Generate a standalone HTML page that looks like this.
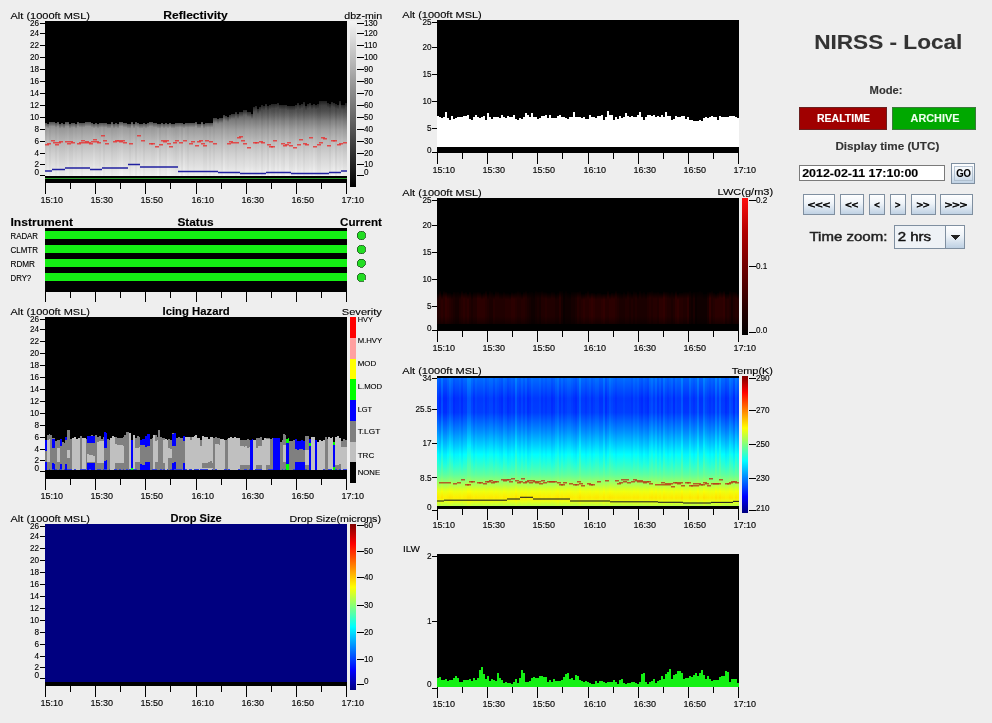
<!DOCTYPE html><html><head><meta charset="utf-8"><style>html,body{margin:0;padding:0;background:#eeeeee;overflow:hidden}svg{display:block;will-change:transform}text{font-family:"Liberation Sans",sans-serif}</style></head><body><svg width="992" height="723" viewBox="0 0 992 723" shape-rendering="crispEdges"><defs><linearGradient id="rg0" gradientUnits="userSpaceOnUse" x1="0" y1="100" x2="0" y2="176"><stop offset="0" stop-color="#444444"/><stop offset="0.05" stop-color="#4c4c4c"/><stop offset="0.16" stop-color="#606060"/><stop offset="0.28" stop-color="#7a7a7a"/><stop offset="0.39" stop-color="#999999"/><stop offset="0.53" stop-color="#b2b2b2"/><stop offset="0.72" stop-color="#cbcbcb"/><stop offset="0.86" stop-color="#dbdbdb"/><stop offset="0.95" stop-color="#e5e5e5"/><stop offset="1" stop-color="#eaeaea"/></linearGradient><linearGradient id="rg1" gradientUnits="userSpaceOnUse" x1="0" y1="100" x2="0" y2="176"><stop offset="0" stop-color="#474747"/><stop offset="0.05" stop-color="#4f4f4f"/><stop offset="0.16" stop-color="#636363"/><stop offset="0.28" stop-color="#7c7c7c"/><stop offset="0.39" stop-color="#9b9b9b"/><stop offset="0.53" stop-color="#b5b5b5"/><stop offset="0.72" stop-color="#cecece"/><stop offset="0.86" stop-color="#dddddd"/><stop offset="0.95" stop-color="#e8e8e8"/><stop offset="1" stop-color="#ededed"/></linearGradient><linearGradient id="rg2" gradientUnits="userSpaceOnUse" x1="0" y1="100" x2="0" y2="176"><stop offset="0" stop-color="#494949"/><stop offset="0.05" stop-color="#515151"/><stop offset="0.16" stop-color="#666666"/><stop offset="0.28" stop-color="#7f7f7f"/><stop offset="0.39" stop-color="#9e9e9e"/><stop offset="0.53" stop-color="#b7b7b7"/><stop offset="0.72" stop-color="#d1d1d1"/><stop offset="0.86" stop-color="#e0e0e0"/><stop offset="0.95" stop-color="#eaeaea"/><stop offset="1" stop-color="#efefef"/></linearGradient><linearGradient id="rg3" gradientUnits="userSpaceOnUse" x1="0" y1="100" x2="0" y2="176"><stop offset="0" stop-color="#4c4c4c"/><stop offset="0.05" stop-color="#545454"/><stop offset="0.16" stop-color="#686868"/><stop offset="0.28" stop-color="#828282"/><stop offset="0.39" stop-color="#a0a0a0"/><stop offset="0.53" stop-color="#bababa"/><stop offset="0.72" stop-color="#d3d3d3"/><stop offset="0.86" stop-color="#e2e2e2"/><stop offset="0.95" stop-color="#ededed"/><stop offset="1" stop-color="#f2f2f2"/></linearGradient><linearGradient id="rg4" gradientUnits="userSpaceOnUse" x1="0" y1="100" x2="0" y2="176"><stop offset="0" stop-color="#4f4f4f"/><stop offset="0.05" stop-color="#565656"/><stop offset="0.16" stop-color="#6b6b6b"/><stop offset="0.28" stop-color="#848484"/><stop offset="0.39" stop-color="#a3a3a3"/><stop offset="0.53" stop-color="#bcbcbc"/><stop offset="0.72" stop-color="#d6d6d6"/><stop offset="0.86" stop-color="#e5e5e5"/><stop offset="0.95" stop-color="#efefef"/><stop offset="1" stop-color="#f4f4f4"/></linearGradient><linearGradient id="edge" x1="0" y1="0" x2="0" y2="1"><stop offset="0" stop-color="#000" stop-opacity="0.45"/><stop offset="1" stop-color="#000" stop-opacity="0"/></linearGradient><linearGradient id="dk" gradientUnits="userSpaceOnUse" x1="0" y1="101" x2="0" y2="121"><stop offset="0" stop-color="#000" stop-opacity="0.3"/><stop offset="0.5" stop-color="#000" stop-opacity="0.2"/><stop offset="1" stop-color="#000" stop-opacity="0"/></linearGradient><linearGradient id="cbg" x1="0" y1="0" x2="0" y2="1"><stop offset="0" stop-color="#f4f4f4"/><stop offset="1" stop-color="#000"/></linearGradient><linearGradient id="cbj" x1="0" y1="0" x2="0" y2="1"><stop offset="0" stop-color="#7f0000"/><stop offset="0.12" stop-color="#ff0000"/><stop offset="0.25" stop-color="#ff7f00"/><stop offset="0.38" stop-color="#ffff00"/><stop offset="0.5" stop-color="#7fff7f"/><stop offset="0.62" stop-color="#00ffff"/><stop offset="0.75" stop-color="#007fff"/><stop offset="0.88" stop-color="#0000ff"/><stop offset="1" stop-color="#00007f"/></linearGradient><linearGradient id="lw0" x1="0" y1="0" x2="0" y2="1"><stop offset="0" stop-color="#030000"/><stop offset="0.2" stop-color="#0a0000"/><stop offset="0.75" stop-color="#0a0000"/><stop offset="1" stop-color="#060000"/></linearGradient><linearGradient id="lw1" x1="0" y1="0" x2="0" y2="1"><stop offset="0" stop-color="#030000"/><stop offset="0.2" stop-color="#0f0000"/><stop offset="0.75" stop-color="#0f0000"/><stop offset="1" stop-color="#090000"/></linearGradient><linearGradient id="lw2" x1="0" y1="0" x2="0" y2="1"><stop offset="0" stop-color="#030000"/><stop offset="0.2" stop-color="#150000"/><stop offset="0.75" stop-color="#150000"/><stop offset="1" stop-color="#0c0000"/></linearGradient><linearGradient id="lw3" x1="0" y1="0" x2="0" y2="1"><stop offset="0" stop-color="#030000"/><stop offset="0.2" stop-color="#1a0000"/><stop offset="0.75" stop-color="#1a0000"/><stop offset="1" stop-color="#0f0000"/></linearGradient><linearGradient id="lw4" x1="0" y1="0" x2="0" y2="1"><stop offset="0" stop-color="#030000"/><stop offset="0.2" stop-color="#200000"/><stop offset="0.75" stop-color="#200000"/><stop offset="1" stop-color="#120000"/></linearGradient><linearGradient id="lw5" x1="0" y1="0" x2="0" y2="1"><stop offset="0" stop-color="#030000"/><stop offset="0.2" stop-color="#250000"/><stop offset="0.75" stop-color="#250000"/><stop offset="1" stop-color="#150000"/></linearGradient><linearGradient id="lw6" x1="0" y1="0" x2="0" y2="1"><stop offset="0" stop-color="#030000"/><stop offset="0.2" stop-color="#2b0000"/><stop offset="0.75" stop-color="#2b0000"/><stop offset="1" stop-color="#180000"/></linearGradient><linearGradient id="lw7" x1="0" y1="0" x2="0" y2="1"><stop offset="0" stop-color="#030000"/><stop offset="0.2" stop-color="#300000"/><stop offset="0.75" stop-color="#300000"/><stop offset="1" stop-color="#1b0000"/></linearGradient><linearGradient id="cbr" x1="0" y1="0" x2="0" y2="1"><stop offset="0" stop-color="#ff1010"/><stop offset="0.25" stop-color="#b00000"/><stop offset="0.5" stop-color="#700000"/><stop offset="0.8" stop-color="#280000"/><stop offset="1" stop-color="#000"/></linearGradient><linearGradient id="tg0" gradientUnits="userSpaceOnUse" x1="0" y1="378" x2="0" y2="505.5"><stop offset="0" stop-color="#005bff"/><stop offset="0.05" stop-color="#004cff"/><stop offset="0.16" stop-color="#0028ff"/><stop offset="0.27" stop-color="#002dff"/><stop offset="0.42" stop-color="#007fff"/><stop offset="0.53" stop-color="#00c1ff"/><stop offset="0.6" stop-color="#00efff"/><stop offset="0.68" stop-color="#1effe0"/><stop offset="0.76" stop-color="#5cffa2"/><stop offset="0.84" stop-color="#adff51"/><stop offset="0.89" stop-color="#ebff13"/><stop offset="0.94" stop-color="#ffef00"/><stop offset="0.97" stop-color="#e0ff1e"/><stop offset="1" stop-color="#b8ff46"/></linearGradient><linearGradient id="tg1" gradientUnits="userSpaceOnUse" x1="0" y1="378" x2="0" y2="505.5"><stop offset="0" stop-color="#0062ff"/><stop offset="0.05" stop-color="#0053ff"/><stop offset="0.16" stop-color="#002fff"/><stop offset="0.27" stop-color="#0035ff"/><stop offset="0.42" stop-color="#0086ff"/><stop offset="0.53" stop-color="#00c8ff"/><stop offset="0.6" stop-color="#00f6ff"/><stop offset="0.68" stop-color="#25ffd9"/><stop offset="0.76" stop-color="#5effa0"/><stop offset="0.84" stop-color="#b0ff4e"/><stop offset="0.89" stop-color="#edff11"/><stop offset="0.94" stop-color="#ffed00"/><stop offset="0.97" stop-color="#e3ff1b"/><stop offset="1" stop-color="#baff44"/></linearGradient><linearGradient id="tg2" gradientUnits="userSpaceOnUse" x1="0" y1="378" x2="0" y2="505.5"><stop offset="0" stop-color="#006bff"/><stop offset="0.05" stop-color="#005bff"/><stop offset="0.16" stop-color="#0038ff"/><stop offset="0.27" stop-color="#003dff"/><stop offset="0.42" stop-color="#008eff"/><stop offset="0.53" stop-color="#00d1ff"/><stop offset="0.6" stop-color="#00ffff"/><stop offset="0.68" stop-color="#2dffd1"/><stop offset="0.76" stop-color="#60ff9e"/><stop offset="0.84" stop-color="#b2ff4c"/><stop offset="0.89" stop-color="#efff0f"/><stop offset="0.94" stop-color="#ffea00"/><stop offset="0.97" stop-color="#e5ff19"/><stop offset="1" stop-color="#bcff42"/></linearGradient><linearGradient id="tg3" gradientUnits="userSpaceOnUse" x1="0" y1="378" x2="0" y2="505.5"><stop offset="0" stop-color="#0073ff"/><stop offset="0.05" stop-color="#0063ff"/><stop offset="0.16" stop-color="#0040ff"/><stop offset="0.27" stop-color="#0045ff"/><stop offset="0.42" stop-color="#0096ff"/><stop offset="0.53" stop-color="#00d9ff"/><stop offset="0.6" stop-color="#08fff6"/><stop offset="0.68" stop-color="#36ffc8"/><stop offset="0.76" stop-color="#63ff9b"/><stop offset="0.84" stop-color="#b4ff4a"/><stop offset="0.89" stop-color="#f2ff0c"/><stop offset="0.94" stop-color="#ffe800"/><stop offset="0.97" stop-color="#e7ff17"/><stop offset="1" stop-color="#bfff3f"/></linearGradient><linearGradient id="tg4" gradientUnits="userSpaceOnUse" x1="0" y1="378" x2="0" y2="505.5"><stop offset="0" stop-color="#007dff"/><stop offset="0.05" stop-color="#006eff"/><stop offset="0.16" stop-color="#004aff"/><stop offset="0.27" stop-color="#004fff"/><stop offset="0.42" stop-color="#00a1ff"/><stop offset="0.53" stop-color="#00e3ff"/><stop offset="0.6" stop-color="#12ffec"/><stop offset="0.68" stop-color="#40ffbe"/><stop offset="0.76" stop-color="#66ff98"/><stop offset="0.84" stop-color="#b8ff46"/><stop offset="0.89" stop-color="#f5ff09"/><stop offset="0.94" stop-color="#ffe500"/><stop offset="0.97" stop-color="#ebff13"/><stop offset="1" stop-color="#c2ff3c"/></linearGradient><linearGradient id="tg5" gradientUnits="userSpaceOnUse" x1="0" y1="378" x2="0" y2="505.5"><stop offset="0" stop-color="#0089ff"/><stop offset="0.05" stop-color="#007aff"/><stop offset="0.16" stop-color="#0056ff"/><stop offset="0.27" stop-color="#005bff"/><stop offset="0.42" stop-color="#00adff"/><stop offset="0.53" stop-color="#00efff"/><stop offset="0.6" stop-color="#1effe0"/><stop offset="0.68" stop-color="#4cffb2"/><stop offset="0.76" stop-color="#6aff94"/><stop offset="0.84" stop-color="#bbff43"/><stop offset="0.89" stop-color="#f8ff06"/><stop offset="0.94" stop-color="#ffe100"/><stop offset="0.97" stop-color="#eeff10"/><stop offset="1" stop-color="#c5ff39"/></linearGradient><linearGradient id="btn" x1="0" y1="0" x2="0" y2="1"><stop offset="0" stop-color="#ffffff"/><stop offset="0.45" stop-color="#eef3f8"/><stop offset="1" stop-color="#bccfe2"/></linearGradient></defs><rect x="0" y="0" width="992" height="723" fill="#eeeeee"/>
<text x="10.5" y="18.6" font-size="9.8" textLength="79.5" lengthAdjust="spacingAndGlyphs" fill="#000" stroke="#000" stroke-width="0.12" font-family="Liberation Sans">Alt (1000ft MSL)</text>
<text x="163.3" y="18.6" font-size="10.6" font-weight="bold" textLength="64.5" lengthAdjust="spacingAndGlyphs" fill="#000" stroke="#000" stroke-width="0.12" font-family="Liberation Sans">Reflectivity</text>
<text x="344.3" y="18.6" font-size="9.8" textLength="37.8" lengthAdjust="spacingAndGlyphs" fill="#000" stroke="#000" stroke-width="0.12" font-family="Liberation Sans">dbz-min</text>
<rect x="45" y="21" width="302" height="155" fill="#000"/>
<rect x="45" y="122.5" width="2" height="53.5" fill="url(#rg1)"/>
<rect x="45" y="122.5" width="2" height="5" fill="url(#edge)"/>
<rect x="47" y="123.5" width="2" height="52.5" fill="url(#rg3)"/>
<rect x="47" y="123.5" width="2" height="5" fill="url(#edge)"/>
<rect x="49" y="121.5" width="2" height="54.5" fill="url(#rg0)"/>
<rect x="49" y="121.5" width="2" height="5" fill="url(#edge)"/>
<rect x="51" y="121.5" width="2" height="54.5" fill="url(#rg2)"/>
<rect x="51" y="121.5" width="2" height="5" fill="url(#edge)"/>
<rect x="53" y="121.5" width="2" height="54.5" fill="url(#rg2)"/>
<rect x="53" y="121.5" width="2" height="5" fill="url(#edge)"/>
<rect x="55" y="122.5" width="2" height="53.5" fill="url(#rg0)"/>
<rect x="55" y="122.5" width="2" height="5" fill="url(#edge)"/>
<rect x="57" y="121.5" width="2" height="54.5" fill="url(#rg2)"/>
<rect x="57" y="121.5" width="2" height="5" fill="url(#edge)"/>
<rect x="59" y="123.5" width="2" height="52.5" fill="url(#rg0)"/>
<rect x="59" y="123.5" width="2" height="5" fill="url(#edge)"/>
<rect x="61" y="122.5" width="2" height="53.5" fill="url(#rg0)"/>
<rect x="61" y="122.5" width="2" height="5" fill="url(#edge)"/>
<rect x="63" y="123.5" width="2" height="52.5" fill="url(#rg0)"/>
<rect x="63" y="123.5" width="2" height="5" fill="url(#edge)"/>
<rect x="65" y="121.5" width="2" height="54.5" fill="url(#rg1)"/>
<rect x="65" y="121.5" width="2" height="5" fill="url(#edge)"/>
<rect x="67" y="121.5" width="2" height="54.5" fill="url(#rg2)"/>
<rect x="67" y="121.5" width="2" height="5" fill="url(#edge)"/>
<rect x="69" y="123.5" width="2" height="52.5" fill="url(#rg0)"/>
<rect x="69" y="123.5" width="2" height="5" fill="url(#edge)"/>
<rect x="71" y="122.5" width="2" height="53.5" fill="url(#rg0)"/>
<rect x="71" y="122.5" width="2" height="5" fill="url(#edge)"/>
<rect x="73" y="122.5" width="2" height="53.5" fill="url(#rg2)"/>
<rect x="73" y="122.5" width="2" height="5" fill="url(#edge)"/>
<rect x="75" y="123.5" width="2" height="52.5" fill="url(#rg1)"/>
<rect x="75" y="123.5" width="2" height="5" fill="url(#edge)"/>
<rect x="77" y="121.5" width="2" height="54.5" fill="url(#rg2)"/>
<rect x="77" y="121.5" width="2" height="5" fill="url(#edge)"/>
<rect x="79" y="122.5" width="2" height="53.5" fill="url(#rg2)"/>
<rect x="79" y="122.5" width="2" height="5" fill="url(#edge)"/>
<rect x="81" y="122.5" width="2" height="53.5" fill="url(#rg0)"/>
<rect x="81" y="122.5" width="2" height="5" fill="url(#edge)"/>
<rect x="83" y="122.5" width="2" height="53.5" fill="url(#rg2)"/>
<rect x="83" y="122.5" width="2" height="5" fill="url(#edge)"/>
<rect x="85" y="121.5" width="2" height="54.5" fill="url(#rg2)"/>
<rect x="85" y="121.5" width="2" height="5" fill="url(#edge)"/>
<rect x="87" y="121.5" width="2" height="54.5" fill="url(#rg2)"/>
<rect x="87" y="121.5" width="2" height="5" fill="url(#edge)"/>
<rect x="89" y="121.5" width="2" height="54.5" fill="url(#rg2)"/>
<rect x="89" y="121.5" width="2" height="5" fill="url(#edge)"/>
<rect x="91" y="122.5" width="2" height="53.5" fill="url(#rg2)"/>
<rect x="91" y="122.5" width="2" height="5" fill="url(#edge)"/>
<rect x="93" y="123.5" width="2" height="52.5" fill="url(#rg4)"/>
<rect x="93" y="123.5" width="2" height="5" fill="url(#edge)"/>
<rect x="95" y="122.5" width="2" height="53.5" fill="url(#rg2)"/>
<rect x="95" y="122.5" width="2" height="5" fill="url(#edge)"/>
<rect x="97" y="123.5" width="2" height="52.5" fill="url(#rg2)"/>
<rect x="97" y="123.5" width="2" height="5" fill="url(#edge)"/>
<rect x="99" y="122.5" width="2" height="53.5" fill="url(#rg1)"/>
<rect x="99" y="122.5" width="2" height="5" fill="url(#edge)"/>
<rect x="101" y="122.5" width="2" height="53.5" fill="url(#rg3)"/>
<rect x="101" y="122.5" width="2" height="5" fill="url(#edge)"/>
<rect x="103" y="122.5" width="2" height="53.5" fill="url(#rg0)"/>
<rect x="103" y="122.5" width="2" height="5" fill="url(#edge)"/>
<rect x="105" y="122.5" width="2" height="53.5" fill="url(#rg2)"/>
<rect x="105" y="122.5" width="2" height="5" fill="url(#edge)"/>
<rect x="107" y="123.5" width="2" height="52.5" fill="url(#rg2)"/>
<rect x="107" y="123.5" width="2" height="5" fill="url(#edge)"/>
<rect x="109" y="123.5" width="2" height="52.5" fill="url(#rg2)"/>
<rect x="109" y="123.5" width="2" height="5" fill="url(#edge)"/>
<rect x="111" y="121.5" width="2" height="54.5" fill="url(#rg0)"/>
<rect x="111" y="121.5" width="2" height="5" fill="url(#edge)"/>
<rect x="113" y="123.5" width="2" height="52.5" fill="url(#rg1)"/>
<rect x="113" y="123.5" width="2" height="5" fill="url(#edge)"/>
<rect x="115" y="122.5" width="2" height="53.5" fill="url(#rg1)"/>
<rect x="115" y="122.5" width="2" height="5" fill="url(#edge)"/>
<rect x="117" y="123.5" width="2" height="52.5" fill="url(#rg2)"/>
<rect x="117" y="123.5" width="2" height="5" fill="url(#edge)"/>
<rect x="119" y="121.5" width="2" height="54.5" fill="url(#rg3)"/>
<rect x="119" y="121.5" width="2" height="5" fill="url(#edge)"/>
<rect x="121" y="121.5" width="2" height="54.5" fill="url(#rg4)"/>
<rect x="121" y="121.5" width="2" height="5" fill="url(#edge)"/>
<rect x="123" y="122.5" width="2" height="53.5" fill="url(#rg2)"/>
<rect x="123" y="122.5" width="2" height="5" fill="url(#edge)"/>
<rect x="125" y="122.5" width="2" height="53.5" fill="url(#rg2)"/>
<rect x="125" y="122.5" width="2" height="5" fill="url(#edge)"/>
<rect x="127" y="123.5" width="2" height="52.5" fill="url(#rg2)"/>
<rect x="127" y="123.5" width="2" height="5" fill="url(#edge)"/>
<rect x="129" y="123.5" width="2" height="52.5" fill="url(#rg0)"/>
<rect x="129" y="123.5" width="2" height="5" fill="url(#edge)"/>
<rect x="131" y="121.5" width="2" height="54.5" fill="url(#rg2)"/>
<rect x="131" y="121.5" width="2" height="5" fill="url(#edge)"/>
<rect x="133" y="123.5" width="2" height="52.5" fill="url(#rg3)"/>
<rect x="133" y="123.5" width="2" height="5" fill="url(#edge)"/>
<rect x="135" y="121.5" width="2" height="54.5" fill="url(#rg0)"/>
<rect x="135" y="121.5" width="2" height="5" fill="url(#edge)"/>
<rect x="137" y="122.5" width="2" height="53.5" fill="url(#rg3)"/>
<rect x="137" y="122.5" width="2" height="5" fill="url(#edge)"/>
<rect x="139" y="123.5" width="2" height="52.5" fill="url(#rg2)"/>
<rect x="139" y="123.5" width="2" height="5" fill="url(#edge)"/>
<rect x="141" y="123.5" width="2" height="52.5" fill="url(#rg3)"/>
<rect x="141" y="123.5" width="2" height="5" fill="url(#edge)"/>
<rect x="143" y="122.5" width="2" height="53.5" fill="url(#rg0)"/>
<rect x="143" y="122.5" width="2" height="5" fill="url(#edge)"/>
<rect x="145" y="123.5" width="2" height="52.5" fill="url(#rg2)"/>
<rect x="145" y="123.5" width="2" height="5" fill="url(#edge)"/>
<rect x="147" y="122.5" width="2" height="53.5" fill="url(#rg2)"/>
<rect x="147" y="122.5" width="2" height="5" fill="url(#edge)"/>
<rect x="149" y="121.5" width="2" height="54.5" fill="url(#rg2)"/>
<rect x="149" y="121.5" width="2" height="5" fill="url(#edge)"/>
<rect x="151" y="121.5" width="2" height="54.5" fill="url(#rg1)"/>
<rect x="151" y="121.5" width="2" height="5" fill="url(#edge)"/>
<rect x="153" y="122.5" width="2" height="53.5" fill="url(#rg1)"/>
<rect x="153" y="122.5" width="2" height="5" fill="url(#edge)"/>
<rect x="155" y="122.5" width="2" height="53.5" fill="url(#rg2)"/>
<rect x="155" y="122.5" width="2" height="5" fill="url(#edge)"/>
<rect x="157" y="123.5" width="2" height="52.5" fill="url(#rg4)"/>
<rect x="157" y="123.5" width="2" height="5" fill="url(#edge)"/>
<rect x="159" y="123.5" width="2" height="52.5" fill="url(#rg0)"/>
<rect x="159" y="123.5" width="2" height="5" fill="url(#edge)"/>
<rect x="161" y="122.5" width="2" height="53.5" fill="url(#rg2)"/>
<rect x="161" y="122.5" width="2" height="5" fill="url(#edge)"/>
<rect x="163" y="123.5" width="2" height="52.5" fill="url(#rg2)"/>
<rect x="163" y="123.5" width="2" height="5" fill="url(#edge)"/>
<rect x="165" y="122.5" width="2" height="53.5" fill="url(#rg1)"/>
<rect x="165" y="122.5" width="2" height="5" fill="url(#edge)"/>
<rect x="167" y="123.5" width="2" height="52.5" fill="url(#rg4)"/>
<rect x="167" y="123.5" width="2" height="5" fill="url(#edge)"/>
<rect x="169" y="122.5" width="2" height="53.5" fill="url(#rg3)"/>
<rect x="169" y="122.5" width="2" height="5" fill="url(#edge)"/>
<rect x="171" y="123.5" width="2" height="52.5" fill="url(#rg2)"/>
<rect x="171" y="123.5" width="2" height="5" fill="url(#edge)"/>
<rect x="173" y="123.5" width="2" height="52.5" fill="url(#rg1)"/>
<rect x="173" y="123.5" width="2" height="5" fill="url(#edge)"/>
<rect x="175" y="122.5" width="2" height="53.5" fill="url(#rg0)"/>
<rect x="175" y="122.5" width="2" height="5" fill="url(#edge)"/>
<rect x="177" y="122.5" width="2" height="53.5" fill="url(#rg1)"/>
<rect x="177" y="122.5" width="2" height="5" fill="url(#edge)"/>
<rect x="179" y="122.5" width="2" height="53.5" fill="url(#rg3)"/>
<rect x="179" y="122.5" width="2" height="5" fill="url(#edge)"/>
<rect x="181" y="122.5" width="2" height="53.5" fill="url(#rg0)"/>
<rect x="181" y="122.5" width="2" height="5" fill="url(#edge)"/>
<rect x="183" y="123.5" width="2" height="52.5" fill="url(#rg4)"/>
<rect x="183" y="123.5" width="2" height="5" fill="url(#edge)"/>
<rect x="185" y="122.5" width="2" height="53.5" fill="url(#rg2)"/>
<rect x="185" y="122.5" width="2" height="5" fill="url(#edge)"/>
<rect x="187" y="122.5" width="2" height="53.5" fill="url(#rg0)"/>
<rect x="187" y="122.5" width="2" height="5" fill="url(#edge)"/>
<rect x="189" y="122.5" width="2" height="53.5" fill="url(#rg2)"/>
<rect x="189" y="122.5" width="2" height="5" fill="url(#edge)"/>
<rect x="191" y="122.5" width="2" height="53.5" fill="url(#rg2)"/>
<rect x="191" y="122.5" width="2" height="5" fill="url(#edge)"/>
<rect x="193" y="122.5" width="2" height="53.5" fill="url(#rg1)"/>
<rect x="193" y="122.5" width="2" height="5" fill="url(#edge)"/>
<rect x="195" y="121.5" width="2" height="54.5" fill="url(#rg2)"/>
<rect x="195" y="121.5" width="2" height="5" fill="url(#edge)"/>
<rect x="197" y="123.5" width="2" height="52.5" fill="url(#rg2)"/>
<rect x="197" y="123.5" width="2" height="5" fill="url(#edge)"/>
<rect x="199" y="123.5" width="2" height="52.5" fill="url(#rg2)"/>
<rect x="199" y="123.5" width="2" height="5" fill="url(#edge)"/>
<rect x="201" y="121.5" width="2" height="54.5" fill="url(#rg2)"/>
<rect x="201" y="121.5" width="2" height="5" fill="url(#edge)"/>
<rect x="203" y="123.5" width="2" height="52.5" fill="url(#rg0)"/>
<rect x="203" y="123.5" width="2" height="5" fill="url(#edge)"/>
<rect x="205" y="122.5" width="2" height="53.5" fill="url(#rg0)"/>
<rect x="205" y="122.5" width="2" height="5" fill="url(#edge)"/>
<rect x="207" y="122.5" width="2" height="53.5" fill="url(#rg2)"/>
<rect x="207" y="122.5" width="2" height="5" fill="url(#edge)"/>
<rect x="209" y="122.5" width="2" height="53.5" fill="url(#rg0)"/>
<rect x="209" y="122.5" width="2" height="5" fill="url(#edge)"/>
<rect x="211" y="122.5" width="2" height="53.5" fill="url(#rg2)"/>
<rect x="211" y="122.5" width="2" height="5" fill="url(#edge)"/>
<rect x="213" y="118" width="2" height="58" fill="url(#rg0)"/>
<rect x="213" y="118" width="2" height="5" fill="url(#edge)"/>
<rect x="215" y="118" width="2" height="58" fill="url(#rg2)"/>
<rect x="215" y="118" width="2" height="5" fill="url(#edge)"/>
<rect x="217" y="119" width="2" height="57" fill="url(#rg2)"/>
<rect x="217" y="119" width="2" height="5" fill="url(#edge)"/>
<rect x="219" y="118" width="2" height="58" fill="url(#rg2)"/>
<rect x="219" y="118" width="2" height="5" fill="url(#edge)"/>
<rect x="221" y="118" width="2" height="58" fill="url(#rg0)"/>
<rect x="221" y="118" width="2" height="5" fill="url(#edge)"/>
<rect x="223" y="115" width="2" height="61" fill="url(#rg4)"/>
<rect x="223" y="115" width="2" height="5" fill="url(#edge)"/>
<rect x="225" y="116" width="2" height="60" fill="url(#rg2)"/>
<rect x="225" y="116" width="2" height="5" fill="url(#edge)"/>
<rect x="227" y="117" width="2" height="59" fill="url(#rg1)"/>
<rect x="227" y="117" width="2" height="5" fill="url(#edge)"/>
<rect x="229" y="115" width="2" height="61" fill="url(#rg2)"/>
<rect x="229" y="115" width="2" height="5" fill="url(#edge)"/>
<rect x="231" y="114" width="2" height="62" fill="url(#rg2)"/>
<rect x="231" y="114" width="2" height="5" fill="url(#edge)"/>
<rect x="233" y="114" width="2" height="62" fill="url(#rg2)"/>
<rect x="233" y="114" width="2" height="5" fill="url(#edge)"/>
<rect x="235" y="112" width="2" height="64" fill="url(#rg0)"/>
<rect x="235" y="112" width="2" height="5" fill="url(#edge)"/>
<rect x="237" y="114" width="2" height="62" fill="url(#rg2)"/>
<rect x="237" y="114" width="2" height="5" fill="url(#edge)"/>
<rect x="239" y="112" width="2" height="64" fill="url(#rg2)"/>
<rect x="239" y="112" width="2" height="5" fill="url(#edge)"/>
<rect x="241" y="112" width="2" height="64" fill="url(#rg2)"/>
<rect x="241" y="112" width="2" height="5" fill="url(#edge)"/>
<rect x="243" y="110" width="2" height="66" fill="url(#rg1)"/>
<rect x="243" y="110" width="2" height="5" fill="url(#edge)"/>
<rect x="245" y="110" width="2" height="66" fill="url(#rg3)"/>
<rect x="245" y="110" width="2" height="5" fill="url(#edge)"/>
<rect x="247" y="112" width="2" height="64" fill="url(#rg3)"/>
<rect x="247" y="112" width="2" height="5" fill="url(#edge)"/>
<rect x="249" y="112" width="2" height="64" fill="url(#rg2)"/>
<rect x="249" y="112" width="2" height="5" fill="url(#edge)"/>
<rect x="251" y="114" width="2" height="62" fill="url(#rg3)"/>
<rect x="251" y="114" width="2" height="5" fill="url(#edge)"/>
<rect x="253" y="107" width="2" height="69" fill="url(#rg2)"/>
<rect x="253" y="107" width="2" height="5" fill="url(#edge)"/>
<rect x="255" y="106" width="2" height="70" fill="url(#rg1)"/>
<rect x="255" y="106" width="2" height="5" fill="url(#edge)"/>
<rect x="257" y="109" width="2" height="67" fill="url(#rg2)"/>
<rect x="257" y="109" width="2" height="5" fill="url(#edge)"/>
<rect x="259" y="107" width="2" height="69" fill="url(#rg3)"/>
<rect x="259" y="107" width="2" height="5" fill="url(#edge)"/>
<rect x="261" y="104.5" width="2" height="71.5" fill="url(#rg0)"/>
<rect x="261" y="104.5" width="2" height="5" fill="url(#edge)"/>
<rect x="263" y="105.5" width="2" height="70.5" fill="url(#rg2)"/>
<rect x="263" y="105.5" width="2" height="5" fill="url(#edge)"/>
<rect x="265" y="103.5" width="2" height="72.5" fill="url(#rg3)"/>
<rect x="265" y="103.5" width="2" height="5" fill="url(#edge)"/>
<rect x="267" y="105.5" width="2" height="70.5" fill="url(#rg0)"/>
<rect x="267" y="105.5" width="2" height="5" fill="url(#edge)"/>
<rect x="269" y="104.5" width="2" height="71.5" fill="url(#rg4)"/>
<rect x="269" y="104.5" width="2" height="5" fill="url(#edge)"/>
<rect x="271" y="103.5" width="2" height="72.5" fill="url(#rg2)"/>
<rect x="271" y="103.5" width="2" height="5" fill="url(#edge)"/>
<rect x="273" y="103.5" width="2" height="72.5" fill="url(#rg1)"/>
<rect x="273" y="103.5" width="2" height="5" fill="url(#edge)"/>
<rect x="275" y="103.5" width="2" height="72.5" fill="url(#rg4)"/>
<rect x="275" y="103.5" width="2" height="5" fill="url(#edge)"/>
<rect x="277" y="102.5" width="2" height="73.5" fill="url(#rg2)"/>
<rect x="277" y="102.5" width="2" height="5" fill="url(#edge)"/>
<rect x="279" y="104.5" width="2" height="71.5" fill="url(#rg4)"/>
<rect x="279" y="104.5" width="2" height="5" fill="url(#edge)"/>
<rect x="281" y="104.5" width="2" height="71.5" fill="url(#rg2)"/>
<rect x="281" y="104.5" width="2" height="5" fill="url(#edge)"/>
<rect x="283" y="104.5" width="2" height="71.5" fill="url(#rg1)"/>
<rect x="283" y="104.5" width="2" height="5" fill="url(#edge)"/>
<rect x="285" y="104.5" width="2" height="71.5" fill="url(#rg4)"/>
<rect x="285" y="104.5" width="2" height="5" fill="url(#edge)"/>
<rect x="287" y="105.5" width="2" height="70.5" fill="url(#rg4)"/>
<rect x="287" y="105.5" width="2" height="5" fill="url(#edge)"/>
<rect x="289" y="105.5" width="2" height="70.5" fill="url(#rg1)"/>
<rect x="289" y="105.5" width="2" height="5" fill="url(#edge)"/>
<rect x="291" y="105.5" width="2" height="70.5" fill="url(#rg1)"/>
<rect x="291" y="105.5" width="2" height="5" fill="url(#edge)"/>
<rect x="293" y="105.5" width="2" height="70.5" fill="url(#rg2)"/>
<rect x="293" y="105.5" width="2" height="5" fill="url(#edge)"/>
<rect x="295" y="104.5" width="2" height="71.5" fill="url(#rg4)"/>
<rect x="295" y="104.5" width="2" height="5" fill="url(#edge)"/>
<rect x="297" y="102.5" width="2" height="73.5" fill="url(#rg1)"/>
<rect x="297" y="102.5" width="2" height="5" fill="url(#edge)"/>
<rect x="299" y="104.5" width="2" height="71.5" fill="url(#rg2)"/>
<rect x="299" y="104.5" width="2" height="5" fill="url(#edge)"/>
<rect x="301" y="103.5" width="2" height="72.5" fill="url(#rg3)"/>
<rect x="301" y="103.5" width="2" height="5" fill="url(#edge)"/>
<rect x="303" y="101.5" width="2" height="74.5" fill="url(#rg0)"/>
<rect x="303" y="101.5" width="2" height="5" fill="url(#edge)"/>
<rect x="305" y="105.5" width="2" height="70.5" fill="url(#rg2)"/>
<rect x="305" y="105.5" width="2" height="5" fill="url(#edge)"/>
<rect x="307" y="103.5" width="2" height="72.5" fill="url(#rg2)"/>
<rect x="307" y="103.5" width="2" height="5" fill="url(#edge)"/>
<rect x="309" y="102.5" width="2" height="73.5" fill="url(#rg3)"/>
<rect x="309" y="102.5" width="2" height="5" fill="url(#edge)"/>
<rect x="311" y="104.5" width="2" height="71.5" fill="url(#rg2)"/>
<rect x="311" y="104.5" width="2" height="5" fill="url(#edge)"/>
<rect x="313" y="103.5" width="2" height="72.5" fill="url(#rg4)"/>
<rect x="313" y="103.5" width="2" height="5" fill="url(#edge)"/>
<rect x="315" y="104.5" width="2" height="71.5" fill="url(#rg2)"/>
<rect x="315" y="104.5" width="2" height="5" fill="url(#edge)"/>
<rect x="317" y="103.5" width="2" height="72.5" fill="url(#rg0)"/>
<rect x="317" y="103.5" width="2" height="5" fill="url(#edge)"/>
<rect x="319" y="100.5" width="2" height="75.5" fill="url(#rg0)"/>
<rect x="319" y="100.5" width="2" height="5" fill="url(#edge)"/>
<rect x="321" y="100.5" width="2" height="75.5" fill="url(#rg2)"/>
<rect x="321" y="100.5" width="2" height="5" fill="url(#edge)"/>
<rect x="323" y="100.5" width="2" height="75.5" fill="url(#rg2)"/>
<rect x="323" y="100.5" width="2" height="5" fill="url(#edge)"/>
<rect x="325" y="100.5" width="2" height="75.5" fill="url(#rg2)"/>
<rect x="325" y="100.5" width="2" height="5" fill="url(#edge)"/>
<rect x="327" y="102.5" width="2" height="73.5" fill="url(#rg2)"/>
<rect x="327" y="102.5" width="2" height="5" fill="url(#edge)"/>
<rect x="329" y="103.5" width="2" height="72.5" fill="url(#rg0)"/>
<rect x="329" y="103.5" width="2" height="5" fill="url(#edge)"/>
<rect x="331" y="101.5" width="2" height="74.5" fill="url(#rg3)"/>
<rect x="331" y="101.5" width="2" height="5" fill="url(#edge)"/>
<rect x="333" y="102.5" width="2" height="73.5" fill="url(#rg4)"/>
<rect x="333" y="102.5" width="2" height="5" fill="url(#edge)"/>
<rect x="335" y="103.5" width="2" height="72.5" fill="url(#rg0)"/>
<rect x="335" y="103.5" width="2" height="5" fill="url(#edge)"/>
<rect x="337" y="104.5" width="2" height="71.5" fill="url(#rg3)"/>
<rect x="337" y="104.5" width="2" height="5" fill="url(#edge)"/>
<rect x="339" y="100.5" width="2" height="75.5" fill="url(#rg2)"/>
<rect x="339" y="100.5" width="2" height="5" fill="url(#edge)"/>
<rect x="341" y="104.5" width="2" height="71.5" fill="url(#rg3)"/>
<rect x="341" y="104.5" width="2" height="5" fill="url(#edge)"/>
<rect x="343" y="104.5" width="2" height="71.5" fill="url(#rg1)"/>
<rect x="343" y="104.5" width="2" height="5" fill="url(#edge)"/>
<rect x="345" y="102.5" width="2" height="73.5" fill="url(#rg1)"/>
<rect x="345" y="102.5" width="2" height="5" fill="url(#edge)"/>
<rect x="215" y="100" width="132" height="21" fill="url(#dk)"/>
<rect x="45" y="144.2" width="4" height="1.2" fill="#e83030" shape-rendering="geometricPrecision"/>
<rect x="47" y="143.2" width="4" height="1.2" fill="#e83030" shape-rendering="geometricPrecision"/>
<rect x="51" y="140.2" width="4" height="1.2" fill="#e83030" shape-rendering="geometricPrecision"/>
<rect x="53" y="142.2" width="4" height="1.2" fill="#e83030" shape-rendering="geometricPrecision"/>
<rect x="55" y="144.2" width="4" height="1.2" fill="#e83030" shape-rendering="geometricPrecision"/>
<rect x="57" y="142.2" width="4" height="1.2" fill="#e83030" shape-rendering="geometricPrecision"/>
<rect x="59" y="141.2" width="4" height="1.2" fill="#e83030" shape-rendering="geometricPrecision"/>
<rect x="65" y="141.2" width="4" height="1.2" fill="#e83030" shape-rendering="geometricPrecision"/>
<rect x="67" y="143.2" width="4" height="1.2" fill="#e83030" shape-rendering="geometricPrecision"/>
<rect x="69" y="141.2" width="4" height="1.2" fill="#e83030" shape-rendering="geometricPrecision"/>
<rect x="71" y="142.2" width="4" height="1.2" fill="#e83030" shape-rendering="geometricPrecision"/>
<rect x="77" y="143.2" width="4" height="1.2" fill="#e83030" shape-rendering="geometricPrecision"/>
<rect x="79" y="142.2" width="4" height="1.2" fill="#e83030" shape-rendering="geometricPrecision"/>
<rect x="81" y="140.2" width="4" height="1.2" fill="#e83030" shape-rendering="geometricPrecision"/>
<rect x="83" y="142.2" width="4" height="1.2" fill="#e83030" shape-rendering="geometricPrecision"/>
<rect x="85" y="141.2" width="4" height="1.2" fill="#e83030" shape-rendering="geometricPrecision"/>
<rect x="87" y="142.2" width="4" height="1.2" fill="#e83030" shape-rendering="geometricPrecision"/>
<rect x="89" y="143.2" width="4" height="1.2" fill="#e83030" shape-rendering="geometricPrecision"/>
<rect x="91" y="141.2" width="4" height="1.2" fill="#e83030" shape-rendering="geometricPrecision"/>
<rect x="93" y="139.2" width="4" height="1.2" fill="#e83030" shape-rendering="geometricPrecision"/>
<rect x="95" y="141.2" width="4" height="1.2" fill="#e83030" shape-rendering="geometricPrecision"/>
<rect x="97" y="142.2" width="4" height="1.2" fill="#e83030" shape-rendering="geometricPrecision"/>
<rect x="101" y="135.2" width="4" height="1.2" fill="#e83030" shape-rendering="geometricPrecision"/>
<rect x="103" y="140.2" width="4" height="1.2" fill="#e83030" shape-rendering="geometricPrecision"/>
<rect x="105" y="143.2" width="4" height="1.2" fill="#e83030" shape-rendering="geometricPrecision"/>
<rect x="113" y="141.2" width="4" height="1.2" fill="#e83030" shape-rendering="geometricPrecision"/>
<rect x="115" y="140.2" width="4" height="1.2" fill="#e83030" shape-rendering="geometricPrecision"/>
<rect x="117" y="140.2" width="4" height="1.2" fill="#e83030" shape-rendering="geometricPrecision"/>
<rect x="119" y="141.2" width="4" height="1.2" fill="#e83030" shape-rendering="geometricPrecision"/>
<rect x="121" y="140.2" width="4" height="1.2" fill="#e83030" shape-rendering="geometricPrecision"/>
<rect x="123" y="142.2" width="4" height="1.2" fill="#e83030" shape-rendering="geometricPrecision"/>
<rect x="129" y="143.2" width="4" height="1.2" fill="#e83030" shape-rendering="geometricPrecision"/>
<rect x="137" y="135.2" width="4" height="1.2" fill="#e83030" shape-rendering="geometricPrecision"/>
<rect x="141" y="140.2" width="4" height="1.2" fill="#e83030" shape-rendering="geometricPrecision"/>
<rect x="149" y="143.2" width="4" height="1.2" fill="#e83030" shape-rendering="geometricPrecision"/>
<rect x="151" y="143.2" width="4" height="1.2" fill="#e83030" shape-rendering="geometricPrecision"/>
<rect x="155" y="146.2" width="4" height="1.2" fill="#e83030" shape-rendering="geometricPrecision"/>
<rect x="159" y="144.2" width="4" height="1.2" fill="#e83030" shape-rendering="geometricPrecision"/>
<rect x="161" y="140.2" width="4" height="1.2" fill="#e83030" shape-rendering="geometricPrecision"/>
<rect x="163" y="141.2" width="4" height="1.2" fill="#e83030" shape-rendering="geometricPrecision"/>
<rect x="165" y="140.2" width="4" height="1.2" fill="#e83030" shape-rendering="geometricPrecision"/>
<rect x="167" y="143.2" width="4" height="1.2" fill="#e83030" shape-rendering="geometricPrecision"/>
<rect x="169" y="146.2" width="4" height="1.2" fill="#e83030" shape-rendering="geometricPrecision"/>
<rect x="173" y="142.2" width="4" height="1.2" fill="#e83030" shape-rendering="geometricPrecision"/>
<rect x="175" y="140.2" width="4" height="1.2" fill="#e83030" shape-rendering="geometricPrecision"/>
<rect x="179" y="142.2" width="4" height="1.2" fill="#e83030" shape-rendering="geometricPrecision"/>
<rect x="183" y="140.2" width="4" height="1.2" fill="#e83030" shape-rendering="geometricPrecision"/>
<rect x="189" y="143.2" width="4" height="1.2" fill="#e83030" shape-rendering="geometricPrecision"/>
<rect x="191" y="141.2" width="4" height="1.2" fill="#e83030" shape-rendering="geometricPrecision"/>
<rect x="195" y="145.2" width="4" height="1.2" fill="#e83030" shape-rendering="geometricPrecision"/>
<rect x="197" y="141.2" width="4" height="1.2" fill="#e83030" shape-rendering="geometricPrecision"/>
<rect x="199" y="140.2" width="4" height="1.2" fill="#e83030" shape-rendering="geometricPrecision"/>
<rect x="201" y="143.2" width="4" height="1.2" fill="#e83030" shape-rendering="geometricPrecision"/>
<rect x="203" y="145.2" width="4" height="1.2" fill="#e83030" shape-rendering="geometricPrecision"/>
<rect x="205" y="140.2" width="4" height="1.2" fill="#e83030" shape-rendering="geometricPrecision"/>
<rect x="209" y="141.2" width="4" height="1.2" fill="#e83030" shape-rendering="geometricPrecision"/>
<rect x="213" y="143.2" width="4" height="1.2" fill="#e83030" shape-rendering="geometricPrecision"/>
<rect x="227" y="143.2" width="4" height="1.2" fill="#e83030" shape-rendering="geometricPrecision"/>
<rect x="229" y="141.2" width="4" height="1.2" fill="#e83030" shape-rendering="geometricPrecision"/>
<rect x="231" y="142.2" width="4" height="1.2" fill="#e83030" shape-rendering="geometricPrecision"/>
<rect x="235" y="142.2" width="4" height="1.2" fill="#e83030" shape-rendering="geometricPrecision"/>
<rect x="237" y="137.2" width="4" height="1.2" fill="#e83030" shape-rendering="geometricPrecision"/>
<rect x="239" y="136.2" width="4" height="1.2" fill="#e83030" shape-rendering="geometricPrecision"/>
<rect x="241" y="140.2" width="4" height="1.2" fill="#e83030" shape-rendering="geometricPrecision"/>
<rect x="243" y="143.2" width="4" height="1.2" fill="#e83030" shape-rendering="geometricPrecision"/>
<rect x="247" y="147.2" width="4" height="1.2" fill="#e83030" shape-rendering="geometricPrecision"/>
<rect x="253" y="142.2" width="4" height="1.2" fill="#e83030" shape-rendering="geometricPrecision"/>
<rect x="255" y="142.2" width="4" height="1.2" fill="#e83030" shape-rendering="geometricPrecision"/>
<rect x="259" y="141.2" width="4" height="1.2" fill="#e83030" shape-rendering="geometricPrecision"/>
<rect x="261" y="142.2" width="4" height="1.2" fill="#e83030" shape-rendering="geometricPrecision"/>
<rect x="267" y="144.2" width="4" height="1.2" fill="#e83030" shape-rendering="geometricPrecision"/>
<rect x="269" y="146.2" width="4" height="1.2" fill="#e83030" shape-rendering="geometricPrecision"/>
<rect x="271" y="146.2" width="4" height="1.2" fill="#e83030" shape-rendering="geometricPrecision"/>
<rect x="273" y="140.2" width="4" height="1.2" fill="#e83030" shape-rendering="geometricPrecision"/>
<rect x="281" y="143.2" width="4" height="1.2" fill="#e83030" shape-rendering="geometricPrecision"/>
<rect x="283" y="145.2" width="4" height="1.2" fill="#e83030" shape-rendering="geometricPrecision"/>
<rect x="285" y="144.2" width="4" height="1.2" fill="#e83030" shape-rendering="geometricPrecision"/>
<rect x="287" y="142.2" width="4" height="1.2" fill="#e83030" shape-rendering="geometricPrecision"/>
<rect x="289" y="145.2" width="4" height="1.2" fill="#e83030" shape-rendering="geometricPrecision"/>
<rect x="293" y="147.2" width="4" height="1.2" fill="#e83030" shape-rendering="geometricPrecision"/>
<rect x="297" y="144.2" width="4" height="1.2" fill="#e83030" shape-rendering="geometricPrecision"/>
<rect x="299" y="139.2" width="4" height="1.2" fill="#e83030" shape-rendering="geometricPrecision"/>
<rect x="303" y="143.2" width="4" height="1.2" fill="#e83030" shape-rendering="geometricPrecision"/>
<rect x="305" y="144.2" width="4" height="1.2" fill="#e83030" shape-rendering="geometricPrecision"/>
<rect x="309" y="137.2" width="4" height="1.2" fill="#e83030" shape-rendering="geometricPrecision"/>
<rect x="313" y="146.2" width="4" height="1.2" fill="#e83030" shape-rendering="geometricPrecision"/>
<rect x="317" y="144.2" width="4" height="1.2" fill="#e83030" shape-rendering="geometricPrecision"/>
<rect x="319" y="142.2" width="4" height="1.2" fill="#e83030" shape-rendering="geometricPrecision"/>
<rect x="321" y="137.2" width="4" height="1.2" fill="#e83030" shape-rendering="geometricPrecision"/>
<rect x="323" y="138.2" width="4" height="1.2" fill="#e83030" shape-rendering="geometricPrecision"/>
<rect x="327" y="145.2" width="4" height="1.2" fill="#e83030" shape-rendering="geometricPrecision"/>
<rect x="331" y="140.2" width="4" height="1.2" fill="#e83030" shape-rendering="geometricPrecision"/>
<rect x="333" y="140.2" width="4" height="1.2" fill="#e83030" shape-rendering="geometricPrecision"/>
<rect x="337" y="144.2" width="4" height="1.2" fill="#e83030" shape-rendering="geometricPrecision"/>
<rect x="339" y="143.2" width="4" height="1.2" fill="#e83030" shape-rendering="geometricPrecision"/>
<rect x="343" y="142.2" width="4" height="1.2" fill="#e83030" shape-rendering="geometricPrecision"/>
<rect x="45" y="170.25" width="7" height="1.5" fill="#2020a0" shape-rendering="geometricPrecision"/>
<rect x="52" y="168.75" width="13" height="1.5" fill="#2020a0" shape-rendering="geometricPrecision"/>
<rect x="65" y="167.25" width="25" height="1.5" fill="#2020a0" shape-rendering="geometricPrecision"/>
<rect x="90" y="168.75" width="12" height="1.5" fill="#2020a0" shape-rendering="geometricPrecision"/>
<rect x="102" y="167.25" width="26" height="1.5" fill="#2020a0" shape-rendering="geometricPrecision"/>
<rect x="128" y="163.75" width="12" height="1.5" fill="#2020a0" shape-rendering="geometricPrecision"/>
<rect x="140" y="166.25" width="38" height="1.5" fill="#2020a0" shape-rendering="geometricPrecision"/>
<rect x="178" y="170.75" width="40" height="1.5" fill="#2020a0" shape-rendering="geometricPrecision"/>
<rect x="218" y="171.75" width="22" height="1.5" fill="#2020a0" shape-rendering="geometricPrecision"/>
<rect x="240" y="172.75" width="26" height="1.5" fill="#2020a0" shape-rendering="geometricPrecision"/>
<rect x="266" y="171.75" width="25" height="1.5" fill="#2020a0" shape-rendering="geometricPrecision"/>
<rect x="291" y="172.75" width="38" height="1.5" fill="#2020a0" shape-rendering="geometricPrecision"/>
<rect x="329" y="171.75" width="12" height="1.5" fill="#2020a0" shape-rendering="geometricPrecision"/>
<rect x="341" y="170.25" width="6" height="1.5" fill="#2020a0" shape-rendering="geometricPrecision"/>
<rect x="45" y="176" width="302" height="7" fill="#000"/>
<rect x="45" y="177.6" width="302" height="1.6" fill="#30a030"/>
<rect x="45" y="183" width="1" height="11" fill="#000"/>
<text x="40.5" y="202.5" font-size="8.2" textLength="22.6" lengthAdjust="spacingAndGlyphs" fill="#000" stroke="#000" stroke-width="0.12" font-family="Liberation Sans">15:10</text>
<rect x="70" y="183" width="1" height="6" fill="#000"/>
<rect x="95" y="183" width="1" height="11" fill="#000"/>
<text x="90.5" y="202.5" font-size="8.2" textLength="22.6" lengthAdjust="spacingAndGlyphs" fill="#000" stroke="#000" stroke-width="0.12" font-family="Liberation Sans">15:30</text>
<rect x="120" y="183" width="1" height="6" fill="#000"/>
<rect x="145" y="183" width="1" height="11" fill="#000"/>
<text x="140.5" y="202.5" font-size="8.2" textLength="22.6" lengthAdjust="spacingAndGlyphs" fill="#000" stroke="#000" stroke-width="0.12" font-family="Liberation Sans">15:50</text>
<rect x="170" y="183" width="1" height="6" fill="#000"/>
<rect x="196" y="183" width="1" height="11" fill="#000"/>
<text x="191.5" y="202.5" font-size="8.2" textLength="22.6" lengthAdjust="spacingAndGlyphs" fill="#000" stroke="#000" stroke-width="0.12" font-family="Liberation Sans">16:10</text>
<rect x="221" y="183" width="1" height="6" fill="#000"/>
<rect x="246" y="183" width="1" height="11" fill="#000"/>
<text x="241.5" y="202.5" font-size="8.2" textLength="22.6" lengthAdjust="spacingAndGlyphs" fill="#000" stroke="#000" stroke-width="0.12" font-family="Liberation Sans">16:30</text>
<rect x="271" y="183" width="1" height="6" fill="#000"/>
<rect x="296" y="183" width="1" height="11" fill="#000"/>
<text x="291.5" y="202.5" font-size="8.2" textLength="22.6" lengthAdjust="spacingAndGlyphs" fill="#000" stroke="#000" stroke-width="0.12" font-family="Liberation Sans">16:50</text>
<rect x="321" y="183" width="1" height="6" fill="#000"/>
<rect x="346" y="183" width="1" height="11" fill="#000"/>
<text x="341.5" y="202.5" font-size="8.2" textLength="22.6" lengthAdjust="spacingAndGlyphs" fill="#000" stroke="#000" stroke-width="0.12" font-family="Liberation Sans">17:10</text>
<rect x="40" y="23" width="5" height="1" fill="#000"/>
<text x="39" y="26.1" font-size="8.2" text-anchor="end" fill="#000" stroke="#000" stroke-width="0.12" font-family="Liberation Sans">26</text>
<rect x="40" y="33" width="5" height="1" fill="#000"/>
<text x="39" y="35.9" font-size="8.2" text-anchor="end" fill="#000" stroke="#000" stroke-width="0.12" font-family="Liberation Sans">24</text>
<rect x="40" y="45" width="5" height="1" fill="#000"/>
<text x="39" y="47.8" font-size="8.2" text-anchor="end" fill="#000" stroke="#000" stroke-width="0.12" font-family="Liberation Sans">22</text>
<rect x="40" y="57" width="5" height="1" fill="#000"/>
<text x="39" y="59.7" font-size="8.2" text-anchor="end" fill="#000" stroke="#000" stroke-width="0.12" font-family="Liberation Sans">20</text>
<rect x="40" y="69" width="5" height="1" fill="#000"/>
<text x="39" y="71.6" font-size="8.2" text-anchor="end" fill="#000" stroke="#000" stroke-width="0.12" font-family="Liberation Sans">18</text>
<rect x="40" y="81" width="5" height="1" fill="#000"/>
<text x="39" y="83.6" font-size="8.2" text-anchor="end" fill="#000" stroke="#000" stroke-width="0.12" font-family="Liberation Sans">16</text>
<rect x="40" y="93" width="5" height="1" fill="#000"/>
<text x="39" y="95.6" font-size="8.2" text-anchor="end" fill="#000" stroke="#000" stroke-width="0.12" font-family="Liberation Sans">14</text>
<rect x="40" y="105" width="5" height="1" fill="#000"/>
<text x="39" y="107.6" font-size="8.2" text-anchor="end" fill="#000" stroke="#000" stroke-width="0.12" font-family="Liberation Sans">12</text>
<rect x="40" y="117" width="5" height="1" fill="#000"/>
<text x="39" y="119.6" font-size="8.2" text-anchor="end" fill="#000" stroke="#000" stroke-width="0.12" font-family="Liberation Sans">10</text>
<rect x="40" y="129" width="5" height="1" fill="#000"/>
<text x="39" y="131.6" font-size="8.2" text-anchor="end" fill="#000" stroke="#000" stroke-width="0.12" font-family="Liberation Sans">8</text>
<rect x="40" y="141" width="5" height="1" fill="#000"/>
<text x="39" y="143.6" font-size="8.2" text-anchor="end" fill="#000" stroke="#000" stroke-width="0.12" font-family="Liberation Sans">6</text>
<rect x="40" y="153" width="5" height="1" fill="#000"/>
<text x="39" y="155.8" font-size="8.2" text-anchor="end" fill="#000" stroke="#000" stroke-width="0.12" font-family="Liberation Sans">4</text>
<rect x="40" y="164" width="5" height="1" fill="#000"/>
<text x="39" y="167.1" font-size="8.2" text-anchor="end" fill="#000" stroke="#000" stroke-width="0.12" font-family="Liberation Sans">2</text>
<rect x="40" y="175" width="5" height="1" fill="#000"/>
<text x="39" y="175.2" font-size="8.2" text-anchor="end" fill="#000" stroke="#000" stroke-width="0.12" font-family="Liberation Sans">0</text>
<rect x="350" y="21" width="6" height="166" fill="url(#cbg)"/>
<rect x="357" y="23" width="7" height="1" fill="#000"/>
<text x="364" y="26.1" font-size="8.2" fill="#000" stroke="#000" stroke-width="0.12" font-family="Liberation Sans">130</text>
<rect x="357" y="33" width="7" height="1" fill="#000"/>
<text x="364" y="35.9" font-size="8.2" fill="#000" stroke="#000" stroke-width="0.12" font-family="Liberation Sans">120</text>
<rect x="357" y="45" width="7" height="1" fill="#000"/>
<text x="364" y="47.8" font-size="8.2" fill="#000" stroke="#000" stroke-width="0.12" font-family="Liberation Sans">110</text>
<rect x="357" y="57" width="7" height="1" fill="#000"/>
<text x="364" y="59.7" font-size="8.2" fill="#000" stroke="#000" stroke-width="0.12" font-family="Liberation Sans">100</text>
<rect x="357" y="69" width="7" height="1" fill="#000"/>
<text x="364" y="71.6" font-size="8.2" fill="#000" stroke="#000" stroke-width="0.12" font-family="Liberation Sans">90</text>
<rect x="357" y="81" width="7" height="1" fill="#000"/>
<text x="364" y="83.6" font-size="8.2" fill="#000" stroke="#000" stroke-width="0.12" font-family="Liberation Sans">80</text>
<rect x="357" y="93" width="7" height="1" fill="#000"/>
<text x="364" y="95.6" font-size="8.2" fill="#000" stroke="#000" stroke-width="0.12" font-family="Liberation Sans">70</text>
<rect x="357" y="105" width="7" height="1" fill="#000"/>
<text x="364" y="107.6" font-size="8.2" fill="#000" stroke="#000" stroke-width="0.12" font-family="Liberation Sans">60</text>
<rect x="357" y="117" width="7" height="1" fill="#000"/>
<text x="364" y="119.6" font-size="8.2" fill="#000" stroke="#000" stroke-width="0.12" font-family="Liberation Sans">50</text>
<rect x="357" y="129" width="7" height="1" fill="#000"/>
<text x="364" y="131.6" font-size="8.2" fill="#000" stroke="#000" stroke-width="0.12" font-family="Liberation Sans">40</text>
<rect x="357" y="141" width="7" height="1" fill="#000"/>
<text x="364" y="143.6" font-size="8.2" fill="#000" stroke="#000" stroke-width="0.12" font-family="Liberation Sans">30</text>
<rect x="357" y="153" width="7" height="1" fill="#000"/>
<text x="364" y="155.8" font-size="8.2" fill="#000" stroke="#000" stroke-width="0.12" font-family="Liberation Sans">20</text>
<rect x="357" y="164" width="7" height="1" fill="#000"/>
<text x="364" y="167.1" font-size="8.2" fill="#000" stroke="#000" stroke-width="0.12" font-family="Liberation Sans">10</text>
<rect x="357" y="175" width="7" height="1" fill="#000"/>
<text x="364" y="175.2" font-size="8.2" fill="#000" stroke="#000" stroke-width="0.12" font-family="Liberation Sans">0</text>
<text x="10.5" y="225.7" font-size="10.6" font-weight="bold" textLength="62.5" lengthAdjust="spacingAndGlyphs" fill="#000" stroke="#000" stroke-width="0.12" font-family="Liberation Sans">Instrument</text>
<text x="177.4" y="225.8" font-size="10.6" font-weight="bold" textLength="36.3" lengthAdjust="spacingAndGlyphs" fill="#000" stroke="#000" stroke-width="0.12" font-family="Liberation Sans">Status</text>
<text x="340" y="225.7" font-size="10.6" font-weight="bold" textLength="42" lengthAdjust="spacingAndGlyphs" fill="#000" stroke="#000" stroke-width="0.12" font-family="Liberation Sans">Current</text>
<rect x="45" y="228" width="302" height="64" fill="#000"/>
<rect x="45" y="231" width="302" height="8" fill="#14f014"/>
<rect x="45" y="245" width="302" height="8" fill="#14f014"/>
<rect x="45" y="259" width="302" height="8" fill="#14f014"/>
<rect x="45" y="273" width="302" height="8" fill="#14f014"/>
<text x="10.5" y="238.9" font-size="8.2" textLength="27.5" lengthAdjust="spacingAndGlyphs" fill="#000" stroke="#000" stroke-width="0.12" font-family="Liberation Sans">RADAR</text>
<text x="10.5" y="252.6" font-size="8.2" textLength="27.5" lengthAdjust="spacingAndGlyphs" fill="#000" stroke="#000" stroke-width="0.12" font-family="Liberation Sans">CLMTR</text>
<text x="10.5" y="266.6" font-size="8.2" textLength="24.5" lengthAdjust="spacingAndGlyphs" fill="#000" stroke="#000" stroke-width="0.12" font-family="Liberation Sans">RDMR</text>
<text x="10.5" y="280.7" font-size="8.2" textLength="20.7" lengthAdjust="spacingAndGlyphs" fill="#000" stroke="#000" stroke-width="0.12" font-family="Liberation Sans">DRY?</text>
<circle cx="361.4" cy="235.5" r="4.1" fill="#22dd22" stroke="#1a5a1a" stroke-width="0.8"/>
<circle cx="361.4" cy="249.5" r="4.1" fill="#22dd22" stroke="#1a5a1a" stroke-width="0.8"/>
<circle cx="361.4" cy="263.2" r="4.1" fill="#22dd22" stroke="#1a5a1a" stroke-width="0.8"/>
<circle cx="361.4" cy="277.4" r="4.1" fill="#22dd22" stroke="#1a5a1a" stroke-width="0.8"/>
<rect x="45" y="292" width="1" height="9.5" fill="#000"/>
<rect x="70" y="292" width="1" height="5.5" fill="#000"/>
<rect x="95" y="292" width="1" height="9.5" fill="#000"/>
<rect x="120" y="292" width="1" height="5.5" fill="#000"/>
<rect x="145" y="292" width="1" height="9.5" fill="#000"/>
<rect x="170" y="292" width="1" height="5.5" fill="#000"/>
<rect x="196" y="292" width="1" height="9.5" fill="#000"/>
<rect x="221" y="292" width="1" height="5.5" fill="#000"/>
<rect x="246" y="292" width="1" height="9.5" fill="#000"/>
<rect x="271" y="292" width="1" height="5.5" fill="#000"/>
<rect x="296" y="292" width="1" height="9.5" fill="#000"/>
<rect x="321" y="292" width="1" height="5.5" fill="#000"/>
<rect x="346" y="292" width="1" height="9.5" fill="#000"/>
<text x="10.5" y="314.6" font-size="9.8" textLength="79.5" lengthAdjust="spacingAndGlyphs" fill="#000" stroke="#000" stroke-width="0.12" font-family="Liberation Sans">Alt (1000ft MSL)</text>
<text x="162.5" y="314.6" font-size="10.6" font-weight="bold" textLength="67.3" lengthAdjust="spacingAndGlyphs" fill="#000" stroke="#000" stroke-width="0.12" font-family="Liberation Sans">Icing Hazard</text>
<text x="341.8" y="314.5" font-size="9.8" textLength="40.1" lengthAdjust="spacingAndGlyphs" fill="#000" stroke="#000" stroke-width="0.12" font-family="Liberation Sans">Severity</text>
<rect x="45" y="317" width="302" height="162" fill="#000"/>
<rect x="45" y="440" width="2" height="30" fill="#0000ff"/>
<rect x="45" y="451" width="2" height="11" fill="#808080"/>
<rect x="47" y="435" width="2" height="35" fill="#808080"/>
<rect x="47" y="440" width="2" height="22" fill="#c0c0c0"/>
<rect x="49" y="434" width="1" height="36" fill="#808080"/>
<rect x="49" y="439" width="1" height="23" fill="#c0c0c0"/>
<rect x="49" y="469" width="1" height="1" fill="#3040e0"/>
<rect x="50" y="435" width="2" height="35" fill="#808080"/>
<rect x="52" y="438" width="2" height="32" fill="#808080"/>
<rect x="52" y="439" width="2" height="9" fill="#0000ff"/>
<rect x="52" y="463" width="2" height="7" fill="#0000ff"/>
<rect x="52" y="469" width="2" height="1" fill="#3040e0"/>
<rect x="54" y="438" width="1" height="32" fill="#808080"/>
<rect x="54" y="439" width="1" height="9" fill="#0000ff"/>
<rect x="54" y="464" width="1" height="6" fill="#0000ff"/>
<rect x="55" y="441" width="2" height="29" fill="#808080"/>
<rect x="55" y="469" width="2" height="1" fill="#3040e0"/>
<rect x="57" y="440" width="2" height="30" fill="#808080"/>
<rect x="57" y="448" width="2" height="14" fill="#c0c0c0"/>
<rect x="59" y="440" width="1" height="30" fill="#808080"/>
<rect x="59" y="448" width="1" height="14" fill="#c0c0c0"/>
<rect x="59" y="469" width="1" height="1" fill="#3040e0"/>
<rect x="60" y="439" width="2" height="31" fill="#808080"/>
<rect x="60" y="439" width="2" height="7" fill="#0000ff"/>
<rect x="60" y="464" width="2" height="6" fill="#0000ff"/>
<rect x="60" y="469" width="2" height="1" fill="#3040e0"/>
<rect x="62" y="442" width="2" height="28" fill="#808080"/>
<rect x="64" y="443" width="1" height="27" fill="#808080"/>
<rect x="64" y="469" width="1" height="1" fill="#3040e0"/>
<rect x="65" y="437" width="2" height="33" fill="#808080"/>
<rect x="65" y="437" width="2" height="3" fill="#0000ff"/>
<rect x="65" y="464" width="2" height="6" fill="#0000ff"/>
<rect x="67" y="430" width="2" height="40" fill="#808080"/>
<rect x="67" y="450" width="2" height="8" fill="#c0c0c0"/>
<rect x="67" y="469" width="2" height="1" fill="#3040e0"/>
<rect x="69" y="430" width="1" height="40" fill="#808080"/>
<rect x="69" y="450" width="1" height="8" fill="#c0c0c0"/>
<rect x="69" y="469" width="1" height="1" fill="#3040e0"/>
<rect x="70" y="439" width="2" height="31" fill="#808080"/>
<rect x="70" y="469" width="2" height="1" fill="#3040e0"/>
<rect x="72" y="438" width="2" height="32" fill="#c0c0c0"/>
<rect x="74" y="437" width="2" height="33" fill="#c0c0c0"/>
<rect x="74" y="469" width="2" height="1" fill="#3040e0"/>
<rect x="76" y="439" width="2" height="31" fill="#c0c0c0"/>
<rect x="78" y="438" width="2" height="32" fill="#c0c0c0"/>
<rect x="80" y="436" width="2" height="34" fill="#808080"/>
<rect x="80" y="469" width="2" height="1" fill="#3040e0"/>
<rect x="82" y="438" width="2" height="32" fill="#c0c0c0"/>
<rect x="82" y="469" width="2" height="1" fill="#3040e0"/>
<rect x="84" y="438" width="2" height="32" fill="#c0c0c0"/>
<rect x="84" y="469" width="2" height="1" fill="#3040e0"/>
<rect x="86" y="439" width="1" height="31" fill="#808080"/>
<rect x="87" y="436" width="2" height="34" fill="#808080"/>
<rect x="87" y="436" width="2" height="7" fill="#0000ff"/>
<rect x="87" y="463" width="2" height="7" fill="#0000ff"/>
<rect x="87" y="454" width="2" height="8" fill="#c0c0c0"/>
<rect x="89" y="436" width="2" height="34" fill="#808080"/>
<rect x="89" y="436" width="2" height="7" fill="#0000ff"/>
<rect x="89" y="463" width="2" height="7" fill="#0000ff"/>
<rect x="89" y="455" width="2" height="7" fill="#c0c0c0"/>
<rect x="89" y="469" width="2" height="1" fill="#3040e0"/>
<rect x="91" y="435" width="2" height="35" fill="#808080"/>
<rect x="91" y="436" width="2" height="7" fill="#0000ff"/>
<rect x="91" y="463" width="2" height="7" fill="#0000ff"/>
<rect x="91" y="455" width="2" height="7" fill="#c0c0c0"/>
<rect x="93" y="436" width="2" height="34" fill="#808080"/>
<rect x="93" y="436" width="2" height="7" fill="#0000ff"/>
<rect x="93" y="463" width="2" height="7" fill="#0000ff"/>
<rect x="93" y="456" width="2" height="6" fill="#c0c0c0"/>
<rect x="95" y="435" width="2" height="35" fill="#808080"/>
<rect x="97" y="437" width="2" height="33" fill="#808080"/>
<rect x="97" y="442" width="2" height="21" fill="#c0c0c0"/>
<rect x="97" y="469" width="2" height="1" fill="#3040e0"/>
<rect x="99" y="436" width="2" height="34" fill="#808080"/>
<rect x="99" y="441" width="2" height="22" fill="#c0c0c0"/>
<rect x="99" y="469" width="2" height="1" fill="#3040e0"/>
<rect x="101" y="439" width="2" height="31" fill="#808080"/>
<rect x="101" y="441" width="2" height="22" fill="#c0c0c0"/>
<rect x="103" y="437" width="1" height="33" fill="#808080"/>
<rect x="103" y="441" width="1" height="22" fill="#c0c0c0"/>
<rect x="103" y="469" width="1" height="1" fill="#3040e0"/>
<rect x="104" y="432" width="2" height="38" fill="#808080"/>
<rect x="104" y="432" width="2" height="16" fill="#0000ff"/>
<rect x="104" y="461" width="2" height="9" fill="#0000ff"/>
<rect x="104" y="469" width="2" height="1" fill="#3040e0"/>
<rect x="106" y="433" width="1" height="37" fill="#808080"/>
<rect x="106" y="433" width="1" height="15" fill="#0000ff"/>
<rect x="106" y="460" width="1" height="10" fill="#0000ff"/>
<rect x="106" y="469" width="1" height="1" fill="#3040e0"/>
<rect x="107" y="439" width="2" height="31" fill="#808080"/>
<rect x="109" y="440" width="1" height="30" fill="#808080"/>
<rect x="109" y="469" width="1" height="1" fill="#3040e0"/>
<rect x="110" y="438" width="2" height="32" fill="#c0c0c0"/>
<rect x="112" y="436" width="2" height="34" fill="#c0c0c0"/>
<rect x="114" y="437" width="1" height="33" fill="#c0c0c0"/>
<rect x="114" y="469" width="1" height="1" fill="#3040e0"/>
<rect x="115" y="437" width="2" height="33" fill="#808080"/>
<rect x="115" y="444" width="2" height="19" fill="#c0c0c0"/>
<rect x="115" y="469" width="2" height="1" fill="#3040e0"/>
<rect x="117" y="438" width="2" height="32" fill="#808080"/>
<rect x="117" y="445" width="2" height="18" fill="#c0c0c0"/>
<rect x="119" y="438" width="2" height="32" fill="#808080"/>
<rect x="119" y="445" width="2" height="18" fill="#c0c0c0"/>
<rect x="119" y="469" width="2" height="1" fill="#3040e0"/>
<rect x="121" y="438" width="2" height="32" fill="#808080"/>
<rect x="121" y="445" width="2" height="18" fill="#c0c0c0"/>
<rect x="123" y="437" width="1" height="33" fill="#808080"/>
<rect x="123" y="446" width="1" height="17" fill="#c0c0c0"/>
<rect x="123" y="469" width="1" height="1" fill="#3040e0"/>
<rect x="124" y="435" width="2" height="35" fill="#808080"/>
<rect x="126" y="432" width="2" height="38" fill="#808080"/>
<rect x="126" y="469" width="2" height="1" fill="#3040e0"/>
<rect x="128" y="432" width="1" height="38" fill="#808080"/>
<rect x="129" y="433" width="2" height="37" fill="#c0c0c0"/>
<rect x="129" y="469" width="2" height="1" fill="#3040e0"/>
<rect x="131" y="440" width="2" height="30" fill="#0000ff"/>
<rect x="131" y="468" width="2" height="2" fill="#00ff00"/>
<rect x="133" y="435" width="2" height="35" fill="#c0c0c0"/>
<rect x="133" y="469" width="2" height="1" fill="#3040e0"/>
<rect x="135" y="438" width="2" height="32" fill="#808080"/>
<rect x="135" y="448" width="2" height="14" fill="#c0c0c0"/>
<rect x="135" y="469" width="2" height="1" fill="#3040e0"/>
<rect x="137" y="436" width="2" height="34" fill="#808080"/>
<rect x="137" y="448" width="2" height="14" fill="#c0c0c0"/>
<rect x="139" y="437" width="1" height="33" fill="#808080"/>
<rect x="139" y="447" width="1" height="15" fill="#c0c0c0"/>
<rect x="140" y="440" width="2" height="30" fill="#808080"/>
<rect x="140" y="440" width="2" height="5" fill="#0000ff"/>
<rect x="140" y="464" width="2" height="6" fill="#0000ff"/>
<rect x="142" y="439" width="2" height="31" fill="#808080"/>
<rect x="142" y="439" width="2" height="6" fill="#0000ff"/>
<rect x="142" y="465" width="2" height="5" fill="#0000ff"/>
<rect x="144" y="439" width="1" height="31" fill="#808080"/>
<rect x="144" y="439" width="1" height="6" fill="#0000ff"/>
<rect x="144" y="465" width="1" height="5" fill="#0000ff"/>
<rect x="145" y="436" width="2" height="34" fill="#0000ff"/>
<rect x="145" y="447" width="2" height="15" fill="#808080"/>
<rect x="147" y="434" width="2" height="36" fill="#0000ff"/>
<rect x="147" y="446" width="2" height="16" fill="#808080"/>
<rect x="149" y="434" width="1" height="36" fill="#0000ff"/>
<rect x="149" y="446" width="1" height="16" fill="#808080"/>
<rect x="150" y="439" width="2" height="31" fill="#808080"/>
<rect x="152" y="438" width="1" height="32" fill="#808080"/>
<rect x="152" y="469" width="1" height="1" fill="#3040e0"/>
<rect x="153" y="435" width="2" height="35" fill="#c0c0c0"/>
<rect x="153" y="469" width="2" height="1" fill="#3040e0"/>
<rect x="155" y="435" width="2" height="35" fill="#808080"/>
<rect x="155" y="441" width="2" height="21" fill="#c0c0c0"/>
<rect x="155" y="469" width="2" height="1" fill="#3040e0"/>
<rect x="157" y="437" width="1" height="33" fill="#808080"/>
<rect x="157" y="440" width="1" height="22" fill="#c0c0c0"/>
<rect x="158" y="430" width="2" height="40" fill="#808080"/>
<rect x="160" y="437" width="2" height="33" fill="#808080"/>
<rect x="160" y="469" width="2" height="1" fill="#3040e0"/>
<rect x="162" y="438" width="1" height="32" fill="#808080"/>
<rect x="163" y="438" width="2" height="32" fill="#808080"/>
<rect x="163" y="440" width="2" height="23" fill="#c0c0c0"/>
<rect x="163" y="469" width="2" height="1" fill="#3040e0"/>
<rect x="165" y="439" width="2" height="31" fill="#c0c0c0"/>
<rect x="167" y="440" width="1" height="30" fill="#c0c0c0"/>
<rect x="167" y="469" width="1" height="1" fill="#3040e0"/>
<rect x="168" y="439" width="2" height="31" fill="#808080"/>
<rect x="168" y="448" width="2" height="10" fill="#c0c0c0"/>
<rect x="170" y="440" width="2" height="30" fill="#808080"/>
<rect x="170" y="449" width="2" height="9" fill="#c0c0c0"/>
<rect x="170" y="469" width="2" height="1" fill="#3040e0"/>
<rect x="172" y="433" width="2" height="37" fill="#808080"/>
<rect x="172" y="434" width="2" height="12" fill="#0000ff"/>
<rect x="172" y="463" width="2" height="7" fill="#0000ff"/>
<rect x="174" y="433" width="2" height="37" fill="#808080"/>
<rect x="174" y="433" width="2" height="13" fill="#0000ff"/>
<rect x="174" y="462" width="2" height="8" fill="#0000ff"/>
<rect x="174" y="469" width="2" height="1" fill="#3040e0"/>
<rect x="176" y="438" width="2" height="32" fill="#808080"/>
<rect x="176" y="469" width="2" height="1" fill="#3040e0"/>
<rect x="178" y="437" width="2" height="33" fill="#808080"/>
<rect x="178" y="469" width="2" height="1" fill="#3040e0"/>
<rect x="180" y="438" width="2" height="32" fill="#808080"/>
<rect x="180" y="469" width="2" height="1" fill="#3040e0"/>
<rect x="182" y="438" width="1" height="32" fill="#808080"/>
<rect x="183" y="436" width="2" height="34" fill="#808080"/>
<rect x="183" y="436" width="2" height="5" fill="#0000ff"/>
<rect x="183" y="463" width="2" height="7" fill="#0000ff"/>
<rect x="185" y="437" width="2" height="33" fill="#c0c0c0"/>
<rect x="185" y="469" width="2" height="1" fill="#3040e0"/>
<rect x="187" y="437" width="2" height="33" fill="#c0c0c0"/>
<rect x="189" y="437" width="1" height="33" fill="#c0c0c0"/>
<rect x="189" y="469" width="1" height="1" fill="#3040e0"/>
<rect x="190" y="437" width="2" height="33" fill="#808080"/>
<rect x="190" y="440" width="2" height="30" fill="#c0c0c0"/>
<rect x="190" y="469" width="2" height="1" fill="#3040e0"/>
<rect x="192" y="437" width="2" height="33" fill="#c0c0c0"/>
<rect x="194" y="436" width="1" height="34" fill="#c0c0c0"/>
<rect x="194" y="469" width="1" height="1" fill="#3040e0"/>
<rect x="195" y="435" width="2" height="35" fill="#c0c0c0"/>
<rect x="195" y="469" width="2" height="1" fill="#3040e0"/>
<rect x="197" y="438" width="2" height="32" fill="#c0c0c0"/>
<rect x="197" y="469" width="2" height="1" fill="#3040e0"/>
<rect x="199" y="438" width="1" height="32" fill="#c0c0c0"/>
<rect x="200" y="440" width="2" height="30" fill="#808080"/>
<rect x="200" y="446" width="2" height="24" fill="#c0c0c0"/>
<rect x="200" y="469" width="2" height="1" fill="#3040e0"/>
<rect x="202" y="436" width="2" height="34" fill="#c0c0c0"/>
<rect x="202" y="463" width="2" height="5" fill="#808080"/>
<rect x="202" y="469" width="2" height="1" fill="#3040e0"/>
<rect x="204" y="437" width="2" height="33" fill="#c0c0c0"/>
<rect x="204" y="463" width="2" height="5" fill="#808080"/>
<rect x="204" y="469" width="2" height="1" fill="#3040e0"/>
<rect x="206" y="437" width="2" height="33" fill="#c0c0c0"/>
<rect x="206" y="463" width="2" height="5" fill="#808080"/>
<rect x="206" y="469" width="2" height="1" fill="#3040e0"/>
<rect x="208" y="439" width="2" height="31" fill="#c0c0c0"/>
<rect x="208" y="462" width="2" height="6" fill="#808080"/>
<rect x="210" y="437" width="2" height="33" fill="#c0c0c0"/>
<rect x="210" y="461" width="2" height="7" fill="#808080"/>
<rect x="212" y="437" width="1" height="33" fill="#c0c0c0"/>
<rect x="212" y="463" width="1" height="5" fill="#808080"/>
<rect x="212" y="469" width="1" height="1" fill="#3040e0"/>
<rect x="213" y="438" width="2" height="32" fill="#808080"/>
<rect x="215" y="437" width="2" height="33" fill="#808080"/>
<rect x="215" y="444" width="2" height="26" fill="#c0c0c0"/>
<rect x="215" y="469" width="2" height="1" fill="#3040e0"/>
<rect x="217" y="438" width="2" height="32" fill="#808080"/>
<rect x="217" y="444" width="2" height="26" fill="#c0c0c0"/>
<rect x="219" y="438" width="1" height="32" fill="#808080"/>
<rect x="219" y="445" width="1" height="25" fill="#c0c0c0"/>
<rect x="220" y="439" width="2" height="31" fill="#c0c0c0"/>
<rect x="222" y="439" width="2" height="31" fill="#c0c0c0"/>
<rect x="224" y="440" width="1" height="30" fill="#c0c0c0"/>
<rect x="224" y="469" width="1" height="1" fill="#3040e0"/>
<rect x="225" y="440" width="2" height="30" fill="#808080"/>
<rect x="225" y="469" width="2" height="1" fill="#3040e0"/>
<rect x="227" y="439" width="1" height="31" fill="#808080"/>
<rect x="228" y="438" width="2" height="32" fill="#c0c0c0"/>
<rect x="228" y="469" width="2" height="1" fill="#3040e0"/>
<rect x="230" y="437" width="2" height="33" fill="#c0c0c0"/>
<rect x="232" y="438" width="2" height="32" fill="#c0c0c0"/>
<rect x="234" y="437" width="2" height="33" fill="#c0c0c0"/>
<rect x="236" y="438" width="2" height="32" fill="#c0c0c0"/>
<rect x="238" y="438" width="2" height="32" fill="#c0c0c0"/>
<rect x="238" y="469" width="2" height="1" fill="#3040e0"/>
<rect x="240" y="440" width="2" height="30" fill="#808080"/>
<rect x="240" y="446" width="2" height="19" fill="#c0c0c0"/>
<rect x="242" y="440" width="2" height="30" fill="#808080"/>
<rect x="242" y="446" width="2" height="19" fill="#c0c0c0"/>
<rect x="244" y="440" width="1" height="30" fill="#808080"/>
<rect x="244" y="447" width="1" height="18" fill="#c0c0c0"/>
<rect x="244" y="469" width="1" height="1" fill="#3040e0"/>
<rect x="245" y="440" width="2" height="30" fill="#808080"/>
<rect x="245" y="446" width="2" height="19" fill="#c0c0c0"/>
<rect x="245" y="469" width="2" height="1" fill="#3040e0"/>
<rect x="247" y="439" width="2" height="31" fill="#808080"/>
<rect x="247" y="448" width="2" height="17" fill="#c0c0c0"/>
<rect x="249" y="440" width="1" height="30" fill="#808080"/>
<rect x="249" y="447" width="1" height="18" fill="#c0c0c0"/>
<rect x="249" y="469" width="1" height="1" fill="#3040e0"/>
<rect x="250" y="440" width="2" height="30" fill="#0000ff"/>
<rect x="252" y="439" width="1" height="31" fill="#0000ff"/>
<rect x="253" y="440" width="2" height="30" fill="#c0c0c0"/>
<rect x="255" y="440" width="1" height="30" fill="#c0c0c0"/>
<rect x="255" y="469" width="1" height="1" fill="#3040e0"/>
<rect x="256" y="438" width="2" height="32" fill="#808080"/>
<rect x="256" y="448" width="2" height="17" fill="#c0c0c0"/>
<rect x="256" y="469" width="2" height="1" fill="#3040e0"/>
<rect x="258" y="438" width="2" height="32" fill="#808080"/>
<rect x="258" y="446" width="2" height="19" fill="#c0c0c0"/>
<rect x="258" y="469" width="2" height="1" fill="#3040e0"/>
<rect x="260" y="437" width="2" height="33" fill="#808080"/>
<rect x="260" y="446" width="2" height="19" fill="#c0c0c0"/>
<rect x="260" y="469" width="2" height="1" fill="#3040e0"/>
<rect x="262" y="440" width="2" height="30" fill="#c0c0c0"/>
<rect x="264" y="438" width="2" height="32" fill="#c0c0c0"/>
<rect x="266" y="438" width="2" height="32" fill="#808080"/>
<rect x="266" y="439" width="2" height="26" fill="#c0c0c0"/>
<rect x="268" y="438" width="2" height="32" fill="#808080"/>
<rect x="268" y="439" width="2" height="26" fill="#c0c0c0"/>
<rect x="268" y="469" width="2" height="1" fill="#3040e0"/>
<rect x="270" y="439" width="2" height="31" fill="#808080"/>
<rect x="270" y="469" width="2" height="1" fill="#3040e0"/>
<rect x="272" y="438" width="1" height="32" fill="#808080"/>
<rect x="272" y="469" width="1" height="1" fill="#3040e0"/>
<rect x="273" y="438" width="2" height="32" fill="#0000ff"/>
<rect x="275" y="438" width="2" height="32" fill="#0000ff"/>
<rect x="277" y="438" width="2" height="32" fill="#0000ff"/>
<rect x="279" y="438" width="1" height="32" fill="#0000ff"/>
<rect x="280" y="442" width="2" height="28" fill="#808080"/>
<rect x="282" y="440" width="1" height="30" fill="#808080"/>
<rect x="282" y="469" width="1" height="1" fill="#3040e0"/>
<rect x="283" y="434" width="2" height="36" fill="#808080"/>
<rect x="283" y="445" width="2" height="17" fill="#c0c0c0"/>
<rect x="285" y="435" width="1" height="35" fill="#808080"/>
<rect x="285" y="445" width="1" height="17" fill="#c0c0c0"/>
<rect x="285" y="469" width="1" height="1" fill="#3040e0"/>
<rect x="286" y="439" width="2" height="31" fill="#0000ff"/>
<rect x="286" y="439" width="2" height="4" fill="#00ff00"/>
<rect x="286" y="464" width="2" height="6" fill="#00ff00"/>
<rect x="288" y="438" width="1" height="32" fill="#0000ff"/>
<rect x="288" y="438" width="1" height="5" fill="#00ff00"/>
<rect x="288" y="464" width="1" height="6" fill="#00ff00"/>
<rect x="289" y="441" width="2" height="29" fill="#808080"/>
<rect x="291" y="441" width="2" height="29" fill="#808080"/>
<rect x="293" y="440" width="2" height="30" fill="#808080"/>
<rect x="293" y="469" width="2" height="1" fill="#3040e0"/>
<rect x="295" y="439" width="2" height="31" fill="#0000ff"/>
<rect x="295" y="449" width="2" height="13" fill="#808080"/>
<rect x="297" y="441" width="2" height="29" fill="#0000ff"/>
<rect x="297" y="450" width="2" height="12" fill="#808080"/>
<rect x="299" y="441" width="2" height="29" fill="#0000ff"/>
<rect x="299" y="449" width="2" height="13" fill="#808080"/>
<rect x="301" y="440" width="2" height="30" fill="#0000ff"/>
<rect x="301" y="449" width="2" height="13" fill="#808080"/>
<rect x="303" y="441" width="2" height="29" fill="#0000ff"/>
<rect x="303" y="450" width="2" height="12" fill="#808080"/>
<rect x="305" y="436" width="2" height="34" fill="#808080"/>
<rect x="305" y="450" width="2" height="15" fill="#c0c0c0"/>
<rect x="305" y="469" width="2" height="1" fill="#3040e0"/>
<rect x="307" y="436" width="2" height="34" fill="#808080"/>
<rect x="307" y="450" width="2" height="15" fill="#c0c0c0"/>
<rect x="309" y="439" width="2" height="31" fill="#0000ff"/>
<rect x="309" y="443" width="2" height="3" fill="#00ff00"/>
<rect x="311" y="437" width="2" height="33" fill="#c0c0c0"/>
<rect x="313" y="437" width="2" height="33" fill="#c0c0c0"/>
<rect x="315" y="440" width="2" height="30" fill="#0000ff"/>
<rect x="317" y="442" width="2" height="28" fill="#c0c0c0"/>
<rect x="319" y="440" width="2" height="30" fill="#c0c0c0"/>
<rect x="321" y="441" width="2" height="29" fill="#c0c0c0"/>
<rect x="323" y="440" width="2" height="30" fill="#c0c0c0"/>
<rect x="323" y="469" width="2" height="1" fill="#3040e0"/>
<rect x="325" y="437" width="2" height="33" fill="#808080"/>
<rect x="327" y="439" width="1" height="31" fill="#808080"/>
<rect x="328" y="437" width="2" height="33" fill="#c0c0c0"/>
<rect x="328" y="469" width="2" height="1" fill="#3040e0"/>
<rect x="330" y="438" width="2" height="32" fill="#c0c0c0"/>
<rect x="330" y="469" width="2" height="1" fill="#3040e0"/>
<rect x="332" y="437" width="1" height="33" fill="#c0c0c0"/>
<rect x="333" y="442" width="2" height="28" fill="#0000ff"/>
<rect x="333" y="442" width="2" height="3" fill="#00ff00"/>
<rect x="333" y="467" width="2" height="3" fill="#00ff00"/>
<rect x="335" y="437" width="2" height="33" fill="#c0c0c0"/>
<rect x="335" y="465" width="2" height="5" fill="#808080"/>
<rect x="335" y="469" width="2" height="1" fill="#3040e0"/>
<rect x="337" y="436" width="2" height="34" fill="#c0c0c0"/>
<rect x="337" y="465" width="2" height="5" fill="#808080"/>
<rect x="339" y="438" width="2" height="32" fill="#c0c0c0"/>
<rect x="339" y="464" width="2" height="6" fill="#808080"/>
<rect x="339" y="469" width="2" height="1" fill="#3040e0"/>
<rect x="341" y="441" width="2" height="29" fill="#808080"/>
<rect x="341" y="447" width="2" height="23" fill="#c0c0c0"/>
<rect x="343" y="439" width="2" height="31" fill="#808080"/>
<rect x="343" y="447" width="2" height="23" fill="#c0c0c0"/>
<rect x="343" y="469" width="2" height="1" fill="#3040e0"/>
<rect x="345" y="440" width="2" height="30" fill="#808080"/>
<rect x="345" y="447" width="2" height="23" fill="#c0c0c0"/>
<rect x="345" y="469" width="2" height="1" fill="#3040e0"/>
<rect x="45" y="470" width="302" height="9" fill="#000"/>
<rect x="45" y="479" width="1" height="11" fill="#000"/>
<text x="40.5" y="498.8" font-size="8.2" textLength="22.6" lengthAdjust="spacingAndGlyphs" fill="#000" stroke="#000" stroke-width="0.12" font-family="Liberation Sans">15:10</text>
<rect x="70" y="479" width="1" height="6" fill="#000"/>
<rect x="95" y="479" width="1" height="11" fill="#000"/>
<text x="90.5" y="498.8" font-size="8.2" textLength="22.6" lengthAdjust="spacingAndGlyphs" fill="#000" stroke="#000" stroke-width="0.12" font-family="Liberation Sans">15:30</text>
<rect x="120" y="479" width="1" height="6" fill="#000"/>
<rect x="145" y="479" width="1" height="11" fill="#000"/>
<text x="140.5" y="498.8" font-size="8.2" textLength="22.6" lengthAdjust="spacingAndGlyphs" fill="#000" stroke="#000" stroke-width="0.12" font-family="Liberation Sans">15:50</text>
<rect x="170" y="479" width="1" height="6" fill="#000"/>
<rect x="196" y="479" width="1" height="11" fill="#000"/>
<text x="191.5" y="498.8" font-size="8.2" textLength="22.6" lengthAdjust="spacingAndGlyphs" fill="#000" stroke="#000" stroke-width="0.12" font-family="Liberation Sans">16:10</text>
<rect x="221" y="479" width="1" height="6" fill="#000"/>
<rect x="246" y="479" width="1" height="11" fill="#000"/>
<text x="241.5" y="498.8" font-size="8.2" textLength="22.6" lengthAdjust="spacingAndGlyphs" fill="#000" stroke="#000" stroke-width="0.12" font-family="Liberation Sans">16:30</text>
<rect x="271" y="479" width="1" height="6" fill="#000"/>
<rect x="296" y="479" width="1" height="11" fill="#000"/>
<text x="291.5" y="498.8" font-size="8.2" textLength="22.6" lengthAdjust="spacingAndGlyphs" fill="#000" stroke="#000" stroke-width="0.12" font-family="Liberation Sans">16:50</text>
<rect x="321" y="479" width="1" height="6" fill="#000"/>
<rect x="346" y="479" width="1" height="11" fill="#000"/>
<text x="341.5" y="498.8" font-size="8.2" textLength="22.6" lengthAdjust="spacingAndGlyphs" fill="#000" stroke="#000" stroke-width="0.12" font-family="Liberation Sans">17:10</text>
<rect x="40" y="319" width="5" height="1" fill="#000"/>
<text x="39" y="322.1" font-size="8.2" text-anchor="end" fill="#000" stroke="#000" stroke-width="0.12" font-family="Liberation Sans">26</text>
<rect x="40" y="329" width="5" height="1" fill="#000"/>
<text x="39" y="331.9" font-size="8.2" text-anchor="end" fill="#000" stroke="#000" stroke-width="0.12" font-family="Liberation Sans">24</text>
<rect x="40" y="341" width="5" height="1" fill="#000"/>
<text x="39" y="343.8" font-size="8.2" text-anchor="end" fill="#000" stroke="#000" stroke-width="0.12" font-family="Liberation Sans">22</text>
<rect x="40" y="353" width="5" height="1" fill="#000"/>
<text x="39" y="355.7" font-size="8.2" text-anchor="end" fill="#000" stroke="#000" stroke-width="0.12" font-family="Liberation Sans">20</text>
<rect x="40" y="365" width="5" height="1" fill="#000"/>
<text x="39" y="367.6" font-size="8.2" text-anchor="end" fill="#000" stroke="#000" stroke-width="0.12" font-family="Liberation Sans">18</text>
<rect x="40" y="377" width="5" height="1" fill="#000"/>
<text x="39" y="379.6" font-size="8.2" text-anchor="end" fill="#000" stroke="#000" stroke-width="0.12" font-family="Liberation Sans">16</text>
<rect x="40" y="389" width="5" height="1" fill="#000"/>
<text x="39" y="391.6" font-size="8.2" text-anchor="end" fill="#000" stroke="#000" stroke-width="0.12" font-family="Liberation Sans">14</text>
<rect x="40" y="401" width="5" height="1" fill="#000"/>
<text x="39" y="403.6" font-size="8.2" text-anchor="end" fill="#000" stroke="#000" stroke-width="0.12" font-family="Liberation Sans">12</text>
<rect x="40" y="413" width="5" height="1" fill="#000"/>
<text x="39" y="415.6" font-size="8.2" text-anchor="end" fill="#000" stroke="#000" stroke-width="0.12" font-family="Liberation Sans">10</text>
<rect x="40" y="425" width="5" height="1" fill="#000"/>
<text x="39" y="427.6" font-size="8.2" text-anchor="end" fill="#000" stroke="#000" stroke-width="0.12" font-family="Liberation Sans">8</text>
<rect x="40" y="437" width="5" height="1" fill="#000"/>
<text x="39" y="439.6" font-size="8.2" text-anchor="end" fill="#000" stroke="#000" stroke-width="0.12" font-family="Liberation Sans">6</text>
<rect x="40" y="449" width="5" height="1" fill="#000"/>
<text x="39" y="451.8" font-size="8.2" text-anchor="end" fill="#000" stroke="#000" stroke-width="0.12" font-family="Liberation Sans">4</text>
<rect x="40" y="460" width="5" height="1" fill="#000"/>
<text x="39" y="463.1" font-size="8.2" text-anchor="end" fill="#000" stroke="#000" stroke-width="0.12" font-family="Liberation Sans">2</text>
<rect x="40" y="471" width="5" height="1" fill="#000"/>
<text x="39" y="471.2" font-size="8.2" text-anchor="end" fill="#000" stroke="#000" stroke-width="0.12" font-family="Liberation Sans">0</text>
<rect x="350" y="317" width="6" height="20.75" fill="#ff0000"/>
<rect x="350" y="337.75" width="6" height="20.75" fill="#ffa0a0"/>
<rect x="350" y="358.5" width="6" height="20.75" fill="#ffff00"/>
<rect x="350" y="379.25" width="6" height="20.75" fill="#00ff00"/>
<rect x="350" y="400" width="6" height="20.75" fill="#0000ff"/>
<rect x="350" y="420.75" width="6" height="20.75" fill="#808080"/>
<rect x="350" y="441.5" width="6" height="20.75" fill="#c0c0c0"/>
<rect x="350" y="462.25" width="6" height="20.75" fill="#000000"/>
<text x="357.7" y="322" font-size="7.6" textLength="15.2" lengthAdjust="spacingAndGlyphs" fill="#000" stroke="#000" stroke-width="0.12" font-family="Liberation Sans">HVY</text>
<text x="357.7" y="342.9" font-size="7.6" textLength="24.5" lengthAdjust="spacingAndGlyphs" fill="#000" stroke="#000" stroke-width="0.12" font-family="Liberation Sans">M.HVY</text>
<text x="357.7" y="365.7" font-size="7.6" textLength="18.5" lengthAdjust="spacingAndGlyphs" fill="#000" stroke="#000" stroke-width="0.12" font-family="Liberation Sans">MOD</text>
<text x="357.7" y="388.5" font-size="7.6" textLength="24.5" lengthAdjust="spacingAndGlyphs" fill="#000" stroke="#000" stroke-width="0.12" font-family="Liberation Sans">L.MOD</text>
<text x="357.7" y="411.6" font-size="7.6" textLength="14.5" lengthAdjust="spacingAndGlyphs" fill="#000" stroke="#000" stroke-width="0.12" font-family="Liberation Sans">LGT</text>
<text x="357.7" y="434.4" font-size="7.6" textLength="22.5" lengthAdjust="spacingAndGlyphs" fill="#000" stroke="#000" stroke-width="0.12" font-family="Liberation Sans">T.LGT</text>
<text x="357.7" y="457.5" font-size="7.6" textLength="16.5" lengthAdjust="spacingAndGlyphs" fill="#000" stroke="#000" stroke-width="0.12" font-family="Liberation Sans">TRC</text>
<text x="357.7" y="475.2" font-size="7.6" textLength="22.5" lengthAdjust="spacingAndGlyphs" fill="#000" stroke="#000" stroke-width="0.12" font-family="Liberation Sans">NONE</text>
<text x="10.5" y="521.6" font-size="9.8" textLength="79.5" lengthAdjust="spacingAndGlyphs" fill="#000" stroke="#000" stroke-width="0.12" font-family="Liberation Sans">Alt (1000ft MSL)</text>
<text x="170.6" y="522" font-size="10.6" font-weight="bold" textLength="51.2" lengthAdjust="spacingAndGlyphs" fill="#000" stroke="#000" stroke-width="0.12" font-family="Liberation Sans">Drop Size</text>
<text x="289.5" y="522" font-size="9.8" textLength="91.5" lengthAdjust="spacingAndGlyphs" fill="#000" stroke="#000" stroke-width="0.12" font-family="Liberation Sans">Drop Size(microns)</text>
<rect x="45" y="524" width="302" height="158" fill="#000080"/>
<rect x="45" y="682" width="302" height="4" fill="#000"/>
<rect x="45" y="686" width="1" height="11" fill="#000"/>
<text x="40.5" y="705.7" font-size="8.2" textLength="22.6" lengthAdjust="spacingAndGlyphs" fill="#000" stroke="#000" stroke-width="0.12" font-family="Liberation Sans">15:10</text>
<rect x="70" y="686" width="1" height="6" fill="#000"/>
<rect x="95" y="686" width="1" height="11" fill="#000"/>
<text x="90.5" y="705.7" font-size="8.2" textLength="22.6" lengthAdjust="spacingAndGlyphs" fill="#000" stroke="#000" stroke-width="0.12" font-family="Liberation Sans">15:30</text>
<rect x="120" y="686" width="1" height="6" fill="#000"/>
<rect x="145" y="686" width="1" height="11" fill="#000"/>
<text x="140.5" y="705.7" font-size="8.2" textLength="22.6" lengthAdjust="spacingAndGlyphs" fill="#000" stroke="#000" stroke-width="0.12" font-family="Liberation Sans">15:50</text>
<rect x="170" y="686" width="1" height="6" fill="#000"/>
<rect x="196" y="686" width="1" height="11" fill="#000"/>
<text x="191.5" y="705.7" font-size="8.2" textLength="22.6" lengthAdjust="spacingAndGlyphs" fill="#000" stroke="#000" stroke-width="0.12" font-family="Liberation Sans">16:10</text>
<rect x="221" y="686" width="1" height="6" fill="#000"/>
<rect x="246" y="686" width="1" height="11" fill="#000"/>
<text x="241.5" y="705.7" font-size="8.2" textLength="22.6" lengthAdjust="spacingAndGlyphs" fill="#000" stroke="#000" stroke-width="0.12" font-family="Liberation Sans">16:30</text>
<rect x="271" y="686" width="1" height="6" fill="#000"/>
<rect x="296" y="686" width="1" height="11" fill="#000"/>
<text x="291.5" y="705.7" font-size="8.2" textLength="22.6" lengthAdjust="spacingAndGlyphs" fill="#000" stroke="#000" stroke-width="0.12" font-family="Liberation Sans">16:50</text>
<rect x="321" y="686" width="1" height="6" fill="#000"/>
<rect x="346" y="686" width="1" height="11" fill="#000"/>
<text x="341.5" y="705.7" font-size="8.2" textLength="22.6" lengthAdjust="spacingAndGlyphs" fill="#000" stroke="#000" stroke-width="0.12" font-family="Liberation Sans">17:10</text>
<rect x="40" y="526" width="5" height="1" fill="#000"/>
<text x="39" y="529.1" font-size="8.2" text-anchor="end" fill="#000" stroke="#000" stroke-width="0.12" font-family="Liberation Sans">26</text>
<rect x="40" y="536" width="5" height="1" fill="#000"/>
<text x="39" y="538.9" font-size="8.2" text-anchor="end" fill="#000" stroke="#000" stroke-width="0.12" font-family="Liberation Sans">24</text>
<rect x="40" y="548" width="5" height="1" fill="#000"/>
<text x="39" y="550.8" font-size="8.2" text-anchor="end" fill="#000" stroke="#000" stroke-width="0.12" font-family="Liberation Sans">22</text>
<rect x="40" y="560" width="5" height="1" fill="#000"/>
<text x="39" y="562.7" font-size="8.2" text-anchor="end" fill="#000" stroke="#000" stroke-width="0.12" font-family="Liberation Sans">20</text>
<rect x="40" y="572" width="5" height="1" fill="#000"/>
<text x="39" y="574.6" font-size="8.2" text-anchor="end" fill="#000" stroke="#000" stroke-width="0.12" font-family="Liberation Sans">18</text>
<rect x="40" y="584" width="5" height="1" fill="#000"/>
<text x="39" y="586.6" font-size="8.2" text-anchor="end" fill="#000" stroke="#000" stroke-width="0.12" font-family="Liberation Sans">16</text>
<rect x="40" y="596" width="5" height="1" fill="#000"/>
<text x="39" y="598.6" font-size="8.2" text-anchor="end" fill="#000" stroke="#000" stroke-width="0.12" font-family="Liberation Sans">14</text>
<rect x="40" y="608" width="5" height="1" fill="#000"/>
<text x="39" y="610.6" font-size="8.2" text-anchor="end" fill="#000" stroke="#000" stroke-width="0.12" font-family="Liberation Sans">12</text>
<rect x="40" y="620" width="5" height="1" fill="#000"/>
<text x="39" y="622.6" font-size="8.2" text-anchor="end" fill="#000" stroke="#000" stroke-width="0.12" font-family="Liberation Sans">10</text>
<rect x="40" y="632" width="5" height="1" fill="#000"/>
<text x="39" y="634.6" font-size="8.2" text-anchor="end" fill="#000" stroke="#000" stroke-width="0.12" font-family="Liberation Sans">8</text>
<rect x="40" y="644" width="5" height="1" fill="#000"/>
<text x="39" y="646.6" font-size="8.2" text-anchor="end" fill="#000" stroke="#000" stroke-width="0.12" font-family="Liberation Sans">6</text>
<rect x="40" y="656" width="5" height="1" fill="#000"/>
<text x="39" y="658.8" font-size="8.2" text-anchor="end" fill="#000" stroke="#000" stroke-width="0.12" font-family="Liberation Sans">4</text>
<rect x="40" y="667" width="5" height="1" fill="#000"/>
<text x="39" y="670.1" font-size="8.2" text-anchor="end" fill="#000" stroke="#000" stroke-width="0.12" font-family="Liberation Sans">2</text>
<rect x="40" y="678" width="5" height="1" fill="#000"/>
<text x="39" y="678.2" font-size="8.2" text-anchor="end" fill="#000" stroke="#000" stroke-width="0.12" font-family="Liberation Sans">0</text>
<rect x="350" y="524" width="6" height="166" fill="url(#cbj)"/>
<rect x="357" y="525" width="7" height="1" fill="#000"/>
<text x="364" y="527.8" font-size="8.2" fill="#000" stroke="#000" stroke-width="0.12" font-family="Liberation Sans">60</text>
<rect x="357" y="551" width="7" height="1" fill="#000"/>
<text x="364" y="553.6" font-size="8.2" fill="#000" stroke="#000" stroke-width="0.12" font-family="Liberation Sans">50</text>
<rect x="357" y="577" width="7" height="1" fill="#000"/>
<text x="364" y="580.2" font-size="8.2" fill="#000" stroke="#000" stroke-width="0.12" font-family="Liberation Sans">40</text>
<rect x="357" y="605" width="7" height="1" fill="#000"/>
<text x="364" y="607.6" font-size="8.2" fill="#000" stroke="#000" stroke-width="0.12" font-family="Liberation Sans">30</text>
<rect x="357" y="632" width="7" height="1" fill="#000"/>
<text x="364" y="634.6" font-size="8.2" fill="#000" stroke="#000" stroke-width="0.12" font-family="Liberation Sans">20</text>
<rect x="357" y="659" width="7" height="1" fill="#000"/>
<text x="364" y="661.6" font-size="8.2" fill="#000" stroke="#000" stroke-width="0.12" font-family="Liberation Sans">10</text>
<rect x="357" y="684" width="7" height="1" fill="#000"/>
<text x="364" y="684" font-size="8.2" fill="#000" stroke="#000" stroke-width="0.12" font-family="Liberation Sans">0</text>
<text x="402.3" y="17.7" font-size="9.8" textLength="79.5" lengthAdjust="spacingAndGlyphs" fill="#000" stroke="#000" stroke-width="0.12" font-family="Liberation Sans">Alt (1000ft MSL)</text>
<rect x="437" y="20" width="302" height="133" fill="#000"/>
<path d="M437 147 L437 116 L439 116 L439 117 L441 117 L441 118 L443 118 L443 117 L445 117 L445 112 L447 112 L447 118 L449 118 L449 120 L451 120 L451 116 L453 116 L453 119 L455 119 L455 118 L457 118 L457 117 L459 117 L459 117 L461 117 L461 117 L463 117 L463 116 L465 116 L465 116 L467 116 L467 115 L469 115 L469 119 L471 119 L471 120 L473 120 L473 117 L475 117 L475 115 L477 115 L477 117 L479 117 L479 118 L481 118 L481 117 L483 117 L483 116 L485 116 L485 120 L487 120 L487 113 L489 113 L489 117 L491 117 L491 119 L493 119 L493 117 L495 117 L495 117 L497 117 L497 117 L499 117 L499 118 L501 118 L501 115 L503 115 L503 117 L505 117 L505 118 L507 118 L507 116 L509 116 L509 117 L511 117 L511 117 L513 117 L513 115 L515 115 L515 119 L517 119 L517 120 L519 120 L519 118 L521 118 L521 119 L523 119 L523 117 L525 117 L525 113 L527 113 L527 115 L529 115 L529 117 L531 117 L531 113 L533 113 L533 117 L535 117 L535 117 L537 117 L537 119 L539 119 L539 118 L541 118 L541 116 L543 116 L543 116 L545 116 L545 115 L547 115 L547 118 L549 118 L549 115 L551 115 L551 118 L553 118 L553 118 L555 118 L555 118 L557 118 L557 116 L559 116 L559 115 L561 115 L561 117 L563 117 L563 117 L565 117 L565 118 L567 118 L567 119 L569 119 L569 117 L571 117 L571 117 L573 117 L573 112 L575 112 L575 117 L577 117 L577 117 L579 117 L579 117 L581 117 L581 118 L583 118 L583 117 L585 117 L585 119 L587 119 L587 119 L589 119 L589 115 L591 115 L591 117 L593 117 L593 117 L595 117 L595 118 L597 118 L597 116 L599 116 L599 116 L601 116 L601 115 L603 115 L603 120 L605 120 L605 117 L607 117 L607 111 L609 111 L609 115 L611 115 L611 115 L613 115 L613 120 L615 120 L615 117 L617 117 L617 119 L619 119 L619 116 L621 116 L621 118 L623 118 L623 117 L625 117 L625 113 L627 113 L627 116 L629 116 L629 117 L631 117 L631 116 L633 116 L633 117 L635 117 L635 117 L637 117 L637 115 L639 115 L639 112 L641 112 L641 117 L643 117 L643 120 L645 120 L645 117 L647 117 L647 115 L649 115 L649 115 L651 115 L651 116 L653 116 L653 115 L655 115 L655 117 L657 117 L657 116 L659 116 L659 117 L661 117 L661 115 L663 115 L663 117 L665 117 L665 112 L667 112 L667 116 L669 116 L669 116 L671 116 L671 120 L673 120 L673 119 L675 119 L675 116 L677 116 L677 117 L679 117 L679 117 L681 117 L681 116 L683 116 L683 116 L685 116 L685 119 L687 119 L687 117 L689 117 L689 120 L691 120 L691 120 L693 120 L693 121 L695 121 L695 120.5 L697 120.5 L697 120.5 L699 120.5 L699 120 L701 120 L701 120.5 L703 120.5 L703 118 L705 118 L705 117 L707 117 L707 118 L709 118 L709 117 L711 117 L711 116 L713 116 L713 117 L715 117 L715 117 L717 117 L717 120 L719 120 L719 116 L721 116 L721 117 L723 117 L723 117 L725 117 L725 117 L727 117 L727 117 L729 117 L729 116 L731 116 L731 116 L733 116 L733 116 L735 116 L735 117 L737 117 L737 118 L739 118 L739 147 Z" fill="#ffffff"/>
<rect x="437" y="153" width="1" height="10.5" fill="#000"/>
<text x="432.5" y="172.7" font-size="8.2" textLength="22.6" lengthAdjust="spacingAndGlyphs" fill="#000" stroke="#000" stroke-width="0.12" font-family="Liberation Sans">15:10</text>
<rect x="462" y="153" width="1" height="5.5" fill="#000"/>
<rect x="487" y="153" width="1" height="10.5" fill="#000"/>
<text x="482.5" y="172.7" font-size="8.2" textLength="22.6" lengthAdjust="spacingAndGlyphs" fill="#000" stroke="#000" stroke-width="0.12" font-family="Liberation Sans">15:30</text>
<rect x="512" y="153" width="1" height="5.5" fill="#000"/>
<rect x="537" y="153" width="1" height="10.5" fill="#000"/>
<text x="532.5" y="172.7" font-size="8.2" textLength="22.6" lengthAdjust="spacingAndGlyphs" fill="#000" stroke="#000" stroke-width="0.12" font-family="Liberation Sans">15:50</text>
<rect x="562" y="153" width="1" height="5.5" fill="#000"/>
<rect x="588" y="153" width="1" height="10.5" fill="#000"/>
<text x="583.5" y="172.7" font-size="8.2" textLength="22.6" lengthAdjust="spacingAndGlyphs" fill="#000" stroke="#000" stroke-width="0.12" font-family="Liberation Sans">16:10</text>
<rect x="613" y="153" width="1" height="5.5" fill="#000"/>
<rect x="638" y="153" width="1" height="10.5" fill="#000"/>
<text x="633.5" y="172.7" font-size="8.2" textLength="22.6" lengthAdjust="spacingAndGlyphs" fill="#000" stroke="#000" stroke-width="0.12" font-family="Liberation Sans">16:30</text>
<rect x="663" y="153" width="1" height="5.5" fill="#000"/>
<rect x="688" y="153" width="1" height="10.5" fill="#000"/>
<text x="683.5" y="172.7" font-size="8.2" textLength="22.6" lengthAdjust="spacingAndGlyphs" fill="#000" stroke="#000" stroke-width="0.12" font-family="Liberation Sans">16:50</text>
<rect x="713" y="153" width="1" height="5.5" fill="#000"/>
<rect x="738" y="153" width="1" height="10.5" fill="#000"/>
<text x="733.5" y="172.7" font-size="8.2" textLength="22.6" lengthAdjust="spacingAndGlyphs" fill="#000" stroke="#000" stroke-width="0.12" font-family="Liberation Sans">17:10</text>
<rect x="432" y="22" width="5" height="1" fill="#000"/>
<text x="431.5" y="24.6" font-size="8.2" text-anchor="end" fill="#000" stroke="#000" stroke-width="0.12" font-family="Liberation Sans">25</text>
<rect x="432" y="47" width="5" height="1" fill="#000"/>
<text x="431.5" y="49.9" font-size="8.2" text-anchor="end" fill="#000" stroke="#000" stroke-width="0.12" font-family="Liberation Sans">20</text>
<rect x="432" y="74" width="5" height="1" fill="#000"/>
<text x="431.5" y="76.8" font-size="8.2" text-anchor="end" fill="#000" stroke="#000" stroke-width="0.12" font-family="Liberation Sans">15</text>
<rect x="432" y="101" width="5" height="1" fill="#000"/>
<text x="431.5" y="103.8" font-size="8.2" text-anchor="end" fill="#000" stroke="#000" stroke-width="0.12" font-family="Liberation Sans">10</text>
<rect x="432" y="128" width="5" height="1" fill="#000"/>
<text x="431.5" y="130.8" font-size="8.2" text-anchor="end" fill="#000" stroke="#000" stroke-width="0.12" font-family="Liberation Sans">5</text>
<rect x="432" y="152" width="5" height="1" fill="#000"/>
<text x="431.5" y="152.9" font-size="8.2" text-anchor="end" fill="#000" stroke="#000" stroke-width="0.12" font-family="Liberation Sans">0</text>
<text x="402.3" y="195.7" font-size="9.8" textLength="79.5" lengthAdjust="spacingAndGlyphs" fill="#000" stroke="#000" stroke-width="0.12" font-family="Liberation Sans">Alt (1000ft MSL)</text>
<text x="717.6" y="195.3" font-size="9.8" textLength="55.6" lengthAdjust="spacingAndGlyphs" fill="#000" stroke="#000" stroke-width="0.12" font-family="Liberation Sans">LWC(g/m3)</text>
<rect x="437" y="198" width="302" height="133" fill="#000"/>
<rect x="437" y="293.66" width="2" height="30.34" fill="url(#lw4)"/>
<rect x="439" y="291.04" width="2" height="32.96" fill="url(#lw5)"/>
<rect x="441" y="293.94" width="2" height="30.06" fill="url(#lw6)"/>
<rect x="443" y="291.07" width="2" height="32.93" fill="url(#lw5)"/>
<rect x="445" y="291.73" width="2" height="32.27" fill="url(#lw7)"/>
<rect x="447" y="293.1" width="2" height="30.9" fill="url(#lw6)"/>
<rect x="449" y="293" width="2" height="31" fill="url(#lw5)"/>
<rect x="451" y="293.63" width="2" height="30.37" fill="url(#lw4)"/>
<rect x="453" y="291.54" width="2" height="32.46" fill="url(#lw3)"/>
<rect x="455" y="292.3" width="2" height="31.7" fill="url(#lw2)"/>
<rect x="457" y="291.73" width="2" height="32.27" fill="url(#lw2)"/>
<rect x="459" y="293.14" width="2" height="30.86" fill="url(#lw4)"/>
<rect x="461" y="291.06" width="2" height="32.94" fill="url(#lw5)"/>
<rect x="463" y="292.55" width="2" height="31.45" fill="url(#lw6)"/>
<rect x="465" y="291.98" width="2" height="32.02" fill="url(#lw5)"/>
<rect x="467" y="293.5" width="2" height="30.5" fill="url(#lw6)"/>
<rect x="469" y="291.65" width="2" height="32.35" fill="url(#lw4)"/>
<rect x="471" y="293.85" width="2" height="30.15" fill="url(#lw3)"/>
<rect x="473" y="292.37" width="2" height="31.63" fill="url(#lw4)"/>
<rect x="475" y="292.43" width="2" height="31.57" fill="url(#lw4)"/>
<rect x="477" y="292.03" width="2" height="31.97" fill="url(#lw6)"/>
<rect x="479" y="292.37" width="2" height="31.63" fill="url(#lw6)"/>
<rect x="481" y="293.8" width="2" height="30.2" fill="url(#lw6)"/>
<rect x="483" y="292.84" width="2" height="31.16" fill="url(#lw6)"/>
<rect x="485" y="291.18" width="2" height="32.82" fill="url(#lw5)"/>
<rect x="487" y="293.75" width="2" height="30.25" fill="url(#lw4)"/>
<rect x="489" y="291.33" width="2" height="32.67" fill="url(#lw3)"/>
<rect x="491" y="292.2" width="2" height="31.8" fill="url(#lw3)"/>
<rect x="493" y="293.88" width="2" height="30.12" fill="url(#lw5)"/>
<rect x="495" y="291.49" width="2" height="32.51" fill="url(#lw4)"/>
<rect x="497" y="291.58" width="2" height="32.42" fill="url(#lw4)"/>
<rect x="499" y="293.16" width="2" height="30.84" fill="url(#lw4)"/>
<rect x="501" y="293.49" width="2" height="30.51" fill="url(#lw4)"/>
<rect x="503" y="292.24" width="2" height="31.76" fill="url(#lw4)"/>
<rect x="505" y="293.34" width="2" height="30.66" fill="url(#lw5)"/>
<rect x="507" y="293.35" width="2" height="30.65" fill="url(#lw5)"/>
<rect x="509" y="293.95" width="2" height="30.05" fill="url(#lw5)"/>
<rect x="511" y="292.44" width="2" height="31.56" fill="url(#lw6)"/>
<rect x="513" y="292.96" width="2" height="31.04" fill="url(#lw6)"/>
<rect x="515" y="292.45" width="2" height="31.55" fill="url(#lw5)"/>
<rect x="517" y="291.46" width="2" height="32.54" fill="url(#lw4)"/>
<rect x="519" y="292.16" width="2" height="31.84" fill="url(#lw4)"/>
<rect x="521" y="293.83" width="2" height="30.17" fill="url(#lw5)"/>
<rect x="523" y="292.04" width="2" height="31.96" fill="url(#lw5)"/>
<rect x="525" y="291.22" width="2" height="32.78" fill="url(#lw4)"/>
<rect x="527" y="292.82" width="2" height="31.18" fill="url(#lw3)"/>
<rect x="529" y="292.36" width="2" height="31.64" fill="url(#lw2)"/>
<rect x="531" y="291.63" width="2" height="32.37" fill="url(#lw1)"/>
<rect x="533" y="293.06" width="2" height="30.94" fill="url(#lw1)"/>
<rect x="535" y="291.27" width="2" height="32.73" fill="url(#lw2)"/>
<rect x="537" y="291.89" width="2" height="32.11" fill="url(#lw3)"/>
<rect x="539" y="291.64" width="2" height="32.36" fill="url(#lw2)"/>
<rect x="541" y="291.35" width="2" height="32.65" fill="url(#lw4)"/>
<rect x="543" y="292.26" width="2" height="31.74" fill="url(#lw4)"/>
<rect x="545" y="292.45" width="2" height="31.55" fill="url(#lw5)"/>
<rect x="547" y="293.1" width="2" height="30.9" fill="url(#lw4)"/>
<rect x="549" y="293.2" width="2" height="30.8" fill="url(#lw4)"/>
<rect x="551" y="291.96" width="2" height="32.04" fill="url(#lw4)"/>
<rect x="553" y="292.4" width="2" height="31.6" fill="url(#lw4)"/>
<rect x="555" y="294" width="2" height="30" fill="url(#lw3)"/>
<rect x="557" y="292.94" width="2" height="31.06" fill="url(#lw3)"/>
<rect x="559" y="291.14" width="2" height="32.86" fill="url(#lw5)"/>
<rect x="561" y="291.28" width="2" height="32.72" fill="url(#lw2)"/>
<rect x="563" y="293.27" width="2" height="30.73" fill="url(#lw0)"/>
<rect x="565" y="291.38" width="2" height="32.62" fill="url(#lw1)"/>
<rect x="567" y="292.98" width="2" height="31.02" fill="url(#lw1)"/>
<rect x="569" y="293.74" width="2" height="30.26" fill="url(#lw1)"/>
<rect x="571" y="292.03" width="2" height="31.97" fill="url(#lw2)"/>
<rect x="573" y="292.07" width="2" height="31.93" fill="url(#lw2)"/>
<rect x="575" y="292" width="2" height="32" fill="url(#lw3)"/>
<rect x="577" y="291.61" width="2" height="32.39" fill="url(#lw5)"/>
<rect x="579" y="291.35" width="2" height="32.65" fill="url(#lw4)"/>
<rect x="581" y="293.92" width="2" height="30.08" fill="url(#lw5)"/>
<rect x="583" y="293.99" width="2" height="30.01" fill="url(#lw6)"/>
<rect x="585" y="292.72" width="2" height="31.28" fill="url(#lw5)"/>
<rect x="587" y="291.33" width="2" height="32.67" fill="url(#lw5)"/>
<rect x="589" y="293.3" width="2" height="30.7" fill="url(#lw6)"/>
<rect x="591" y="292.5" width="2" height="31.5" fill="url(#lw7)"/>
<rect x="593" y="293.02" width="2" height="30.98" fill="url(#lw6)"/>
<rect x="595" y="293.63" width="2" height="30.37" fill="url(#lw5)"/>
<rect x="597" y="292.88" width="2" height="31.12" fill="url(#lw5)"/>
<rect x="599" y="292.99" width="2" height="31.01" fill="url(#lw5)"/>
<rect x="601" y="293.79" width="2" height="30.21" fill="url(#lw6)"/>
<rect x="603" y="293.62" width="2" height="30.38" fill="url(#lw7)"/>
<rect x="605" y="293.59" width="2" height="30.41" fill="url(#lw5)"/>
<rect x="607" y="291.1" width="2" height="32.9" fill="url(#lw5)"/>
<rect x="609" y="293.74" width="2" height="30.26" fill="url(#lw6)"/>
<rect x="611" y="292.57" width="2" height="31.43" fill="url(#lw6)"/>
<rect x="613" y="293.09" width="2" height="30.91" fill="url(#lw6)"/>
<rect x="615" y="291.2" width="2" height="32.8" fill="url(#lw5)"/>
<rect x="617" y="292.98" width="2" height="31.02" fill="url(#lw4)"/>
<rect x="619" y="293.31" width="2" height="30.69" fill="url(#lw3)"/>
<rect x="621" y="293.69" width="2" height="30.31" fill="url(#lw3)"/>
<rect x="623" y="292.28" width="2" height="31.72" fill="url(#lw3)"/>
<rect x="625" y="293.58" width="2" height="30.42" fill="url(#lw4)"/>
<rect x="627" y="291.36" width="2" height="32.64" fill="url(#lw4)"/>
<rect x="629" y="292.35" width="2" height="31.65" fill="url(#lw3)"/>
<rect x="631" y="293.77" width="2" height="30.23" fill="url(#lw4)"/>
<rect x="633" y="291.43" width="2" height="32.57" fill="url(#lw3)"/>
<rect x="635" y="291.88" width="2" height="32.12" fill="url(#lw4)"/>
<rect x="637" y="293.67" width="2" height="30.33" fill="url(#lw3)"/>
<rect x="639" y="291.16" width="2" height="32.84" fill="url(#lw3)"/>
<rect x="641" y="293.06" width="2" height="30.94" fill="url(#lw3)"/>
<rect x="643" y="292.17" width="2" height="31.83" fill="url(#lw3)"/>
<rect x="645" y="293.5" width="2" height="30.5" fill="url(#lw3)"/>
<rect x="647" y="291.95" width="2" height="32.05" fill="url(#lw4)"/>
<rect x="649" y="291.5" width="2" height="32.5" fill="url(#lw5)"/>
<rect x="651" y="291.35" width="2" height="32.65" fill="url(#lw4)"/>
<rect x="653" y="292.43" width="2" height="31.57" fill="url(#lw5)"/>
<rect x="655" y="292.36" width="2" height="31.64" fill="url(#lw5)"/>
<rect x="657" y="291.84" width="2" height="32.16" fill="url(#lw4)"/>
<rect x="659" y="292.95" width="2" height="31.05" fill="url(#lw6)"/>
<rect x="661" y="293.18" width="2" height="30.82" fill="url(#lw6)"/>
<rect x="663" y="291.45" width="2" height="32.55" fill="url(#lw7)"/>
<rect x="665" y="291.74" width="2" height="32.26" fill="url(#lw5)"/>
<rect x="667" y="292.13" width="2" height="31.87" fill="url(#lw4)"/>
<rect x="669" y="293.07" width="2" height="30.93" fill="url(#lw4)"/>
<rect x="671" y="291.8" width="2" height="32.2" fill="url(#lw3)"/>
<rect x="673" y="293.35" width="2" height="30.65" fill="url(#lw4)"/>
<rect x="675" y="291.42" width="2" height="32.58" fill="url(#lw6)"/>
<rect x="677" y="293.93" width="2" height="30.07" fill="url(#lw7)"/>
<rect x="679" y="292.64" width="2" height="31.36" fill="url(#lw5)"/>
<rect x="681" y="292.62" width="2" height="31.38" fill="url(#lw5)"/>
<rect x="683" y="292.15" width="2" height="31.85" fill="url(#lw4)"/>
<rect x="685" y="291.93" width="2" height="32.07" fill="url(#lw4)"/>
<rect x="687" y="292.19" width="2" height="31.81" fill="url(#lw6)"/>
<rect x="689" y="291.03" width="2" height="32.97" fill="url(#lw2)"/>
<rect x="691" y="292.62" width="2" height="31.38" fill="url(#lw1)"/>
<rect x="693" y="292.19" width="2" height="31.81" fill="url(#lw3)"/>
<rect x="695" y="291.78" width="2" height="32.22" fill="url(#lw0)"/>
<rect x="697" y="291.61" width="2" height="32.39" fill="url(#lw1)"/>
<rect x="699" y="291.28" width="2" height="32.72" fill="url(#lw1)"/>
<rect x="701" y="292.08" width="2" height="31.92" fill="url(#lw1)"/>
<rect x="703" y="293.57" width="2" height="30.43" fill="url(#lw1)"/>
<rect x="705" y="293.6" width="2" height="30.4" fill="url(#lw1)"/>
<rect x="707" y="292.39" width="2" height="31.61" fill="url(#lw3)"/>
<rect x="709" y="291.84" width="2" height="32.16" fill="url(#lw7)"/>
<rect x="711" y="291.28" width="2" height="32.72" fill="url(#lw4)"/>
<rect x="713" y="292.76" width="2" height="31.24" fill="url(#lw5)"/>
<rect x="715" y="293.78" width="2" height="30.22" fill="url(#lw6)"/>
<rect x="717" y="292.78" width="2" height="31.22" fill="url(#lw6)"/>
<rect x="719" y="291.39" width="2" height="32.61" fill="url(#lw6)"/>
<rect x="721" y="292.13" width="2" height="31.87" fill="url(#lw6)"/>
<rect x="723" y="291.1" width="2" height="32.9" fill="url(#lw7)"/>
<rect x="725" y="293.54" width="2" height="30.46" fill="url(#lw4)"/>
<rect x="727" y="293.59" width="2" height="30.41" fill="url(#lw5)"/>
<rect x="729" y="291.27" width="2" height="32.73" fill="url(#lw4)"/>
<rect x="731" y="291.7" width="2" height="32.3" fill="url(#lw2)"/>
<rect x="733" y="291.55" width="2" height="32.45" fill="url(#lw4)"/>
<rect x="735" y="292.11" width="2" height="31.89" fill="url(#lw5)"/>
<rect x="737" y="293.83" width="2" height="30.17" fill="url(#lw5)"/>
<rect x="437" y="331" width="1" height="10.5" fill="#000"/>
<text x="432.5" y="350.7" font-size="8.2" textLength="22.6" lengthAdjust="spacingAndGlyphs" fill="#000" stroke="#000" stroke-width="0.12" font-family="Liberation Sans">15:10</text>
<rect x="462" y="331" width="1" height="5.5" fill="#000"/>
<rect x="487" y="331" width="1" height="10.5" fill="#000"/>
<text x="482.5" y="350.7" font-size="8.2" textLength="22.6" lengthAdjust="spacingAndGlyphs" fill="#000" stroke="#000" stroke-width="0.12" font-family="Liberation Sans">15:30</text>
<rect x="512" y="331" width="1" height="5.5" fill="#000"/>
<rect x="537" y="331" width="1" height="10.5" fill="#000"/>
<text x="532.5" y="350.7" font-size="8.2" textLength="22.6" lengthAdjust="spacingAndGlyphs" fill="#000" stroke="#000" stroke-width="0.12" font-family="Liberation Sans">15:50</text>
<rect x="562" y="331" width="1" height="5.5" fill="#000"/>
<rect x="588" y="331" width="1" height="10.5" fill="#000"/>
<text x="583.5" y="350.7" font-size="8.2" textLength="22.6" lengthAdjust="spacingAndGlyphs" fill="#000" stroke="#000" stroke-width="0.12" font-family="Liberation Sans">16:10</text>
<rect x="613" y="331" width="1" height="5.5" fill="#000"/>
<rect x="638" y="331" width="1" height="10.5" fill="#000"/>
<text x="633.5" y="350.7" font-size="8.2" textLength="22.6" lengthAdjust="spacingAndGlyphs" fill="#000" stroke="#000" stroke-width="0.12" font-family="Liberation Sans">16:30</text>
<rect x="663" y="331" width="1" height="5.5" fill="#000"/>
<rect x="688" y="331" width="1" height="10.5" fill="#000"/>
<text x="683.5" y="350.7" font-size="8.2" textLength="22.6" lengthAdjust="spacingAndGlyphs" fill="#000" stroke="#000" stroke-width="0.12" font-family="Liberation Sans">16:50</text>
<rect x="713" y="331" width="1" height="5.5" fill="#000"/>
<rect x="738" y="331" width="1" height="10.5" fill="#000"/>
<text x="733.5" y="350.7" font-size="8.2" textLength="22.6" lengthAdjust="spacingAndGlyphs" fill="#000" stroke="#000" stroke-width="0.12" font-family="Liberation Sans">17:10</text>
<rect x="432" y="200" width="5" height="1" fill="#000"/>
<text x="431.5" y="202.6" font-size="8.2" text-anchor="end" fill="#000" stroke="#000" stroke-width="0.12" font-family="Liberation Sans">25</text>
<rect x="432" y="225" width="5" height="1" fill="#000"/>
<text x="431.5" y="227.9" font-size="8.2" text-anchor="end" fill="#000" stroke="#000" stroke-width="0.12" font-family="Liberation Sans">20</text>
<rect x="432" y="252" width="5" height="1" fill="#000"/>
<text x="431.5" y="254.8" font-size="8.2" text-anchor="end" fill="#000" stroke="#000" stroke-width="0.12" font-family="Liberation Sans">15</text>
<rect x="432" y="279" width="5" height="1" fill="#000"/>
<text x="431.5" y="281.8" font-size="8.2" text-anchor="end" fill="#000" stroke="#000" stroke-width="0.12" font-family="Liberation Sans">10</text>
<rect x="432" y="306" width="5" height="1" fill="#000"/>
<text x="431.5" y="308.8" font-size="8.2" text-anchor="end" fill="#000" stroke="#000" stroke-width="0.12" font-family="Liberation Sans">5</text>
<rect x="432" y="330" width="5" height="1" fill="#000"/>
<text x="431.5" y="330.9" font-size="8.2" text-anchor="end" fill="#000" stroke="#000" stroke-width="0.12" font-family="Liberation Sans">0</text>
<rect x="742" y="198" width="6" height="137" fill="url(#cbr)"/>
<rect x="749" y="200" width="7" height="1" fill="#000"/>
<text x="756" y="202.6" font-size="8.2" fill="#000" stroke="#000" stroke-width="0.12" font-family="Liberation Sans">0.2</text>
<rect x="749" y="266" width="7" height="1" fill="#000"/>
<text x="756" y="268.6" font-size="8.2" fill="#000" stroke="#000" stroke-width="0.12" font-family="Liberation Sans">0.1</text>
<rect x="749" y="332" width="7" height="1" fill="#000"/>
<text x="756" y="332.7" font-size="8.2" fill="#000" stroke="#000" stroke-width="0.12" font-family="Liberation Sans">0.0</text>
<text x="402.3" y="373.7" font-size="9.8" textLength="79.5" lengthAdjust="spacingAndGlyphs" fill="#000" stroke="#000" stroke-width="0.12" font-family="Liberation Sans">Alt (1000ft MSL)</text>
<text x="731.7" y="373.7" font-size="9.8" textLength="41.3" lengthAdjust="spacingAndGlyphs" fill="#000" stroke="#000" stroke-width="0.12" font-family="Liberation Sans">Temp(K)</text>
<rect x="437" y="376" width="302" height="2" fill="#000"/>
<rect x="437" y="378" width="2" height="127.5" fill="url(#tg2)"/>
<rect x="439" y="378" width="2" height="127.5" fill="url(#tg0)"/>
<rect x="441" y="378" width="2" height="127.5" fill="url(#tg4)"/>
<rect x="443" y="378" width="2" height="127.5" fill="url(#tg0)"/>
<rect x="445" y="378" width="2" height="127.5" fill="url(#tg0)"/>
<rect x="447" y="378" width="2" height="127.5" fill="url(#tg2)"/>
<rect x="449" y="378" width="2" height="127.5" fill="url(#tg4)"/>
<rect x="451" y="378" width="2" height="127.5" fill="url(#tg3)"/>
<rect x="453" y="378" width="2" height="127.5" fill="url(#tg0)"/>
<rect x="455" y="378" width="2" height="127.5" fill="url(#tg1)"/>
<rect x="457" y="378" width="2" height="127.5" fill="url(#tg1)"/>
<rect x="459" y="378" width="2" height="127.5" fill="url(#tg2)"/>
<rect x="461" y="378" width="2" height="127.5" fill="url(#tg0)"/>
<rect x="463" y="378" width="2" height="127.5" fill="url(#tg2)"/>
<rect x="465" y="378" width="2" height="127.5" fill="url(#tg2)"/>
<rect x="467" y="378" width="2" height="127.5" fill="url(#tg5)"/>
<rect x="469" y="378" width="2" height="127.5" fill="url(#tg5)"/>
<rect x="471" y="378" width="2" height="127.5" fill="url(#tg3)"/>
<rect x="473" y="378" width="2" height="127.5" fill="url(#tg1)"/>
<rect x="475" y="378" width="2" height="127.5" fill="url(#tg3)"/>
<rect x="477" y="378" width="2" height="127.5" fill="url(#tg2)"/>
<rect x="479" y="378" width="2" height="127.5" fill="url(#tg2)"/>
<rect x="481" y="378" width="2" height="127.5" fill="url(#tg2)"/>
<rect x="483" y="378" width="2" height="127.5" fill="url(#tg3)"/>
<rect x="485" y="378" width="2" height="127.5" fill="url(#tg1)"/>
<rect x="487" y="378" width="2" height="127.5" fill="url(#tg2)"/>
<rect x="489" y="378" width="2" height="127.5" fill="url(#tg3)"/>
<rect x="491" y="378" width="2" height="127.5" fill="url(#tg3)"/>
<rect x="493" y="378" width="2" height="127.5" fill="url(#tg1)"/>
<rect x="495" y="378" width="2" height="127.5" fill="url(#tg3)"/>
<rect x="497" y="378" width="2" height="127.5" fill="url(#tg2)"/>
<rect x="499" y="378" width="2" height="127.5" fill="url(#tg1)"/>
<rect x="501" y="378" width="2" height="127.5" fill="url(#tg0)"/>
<rect x="503" y="378" width="2" height="127.5" fill="url(#tg3)"/>
<rect x="505" y="378" width="2" height="127.5" fill="url(#tg2)"/>
<rect x="507" y="378" width="2" height="127.5" fill="url(#tg0)"/>
<rect x="509" y="378" width="2" height="127.5" fill="url(#tg1)"/>
<rect x="511" y="378" width="2" height="127.5" fill="url(#tg2)"/>
<rect x="513" y="378" width="2" height="127.5" fill="url(#tg1)"/>
<rect x="515" y="378" width="2" height="127.5" fill="url(#tg5)"/>
<rect x="517" y="378" width="2" height="127.5" fill="url(#tg2)"/>
<rect x="519" y="378" width="2" height="127.5" fill="url(#tg1)"/>
<rect x="521" y="378" width="2" height="127.5" fill="url(#tg3)"/>
<rect x="523" y="378" width="2" height="127.5" fill="url(#tg1)"/>
<rect x="525" y="378" width="2" height="127.5" fill="url(#tg3)"/>
<rect x="527" y="378" width="2" height="127.5" fill="url(#tg0)"/>
<rect x="529" y="378" width="2" height="127.5" fill="url(#tg1)"/>
<rect x="531" y="378" width="2" height="127.5" fill="url(#tg3)"/>
<rect x="533" y="378" width="2" height="127.5" fill="url(#tg2)"/>
<rect x="535" y="378" width="2" height="127.5" fill="url(#tg2)"/>
<rect x="537" y="378" width="2" height="127.5" fill="url(#tg2)"/>
<rect x="539" y="378" width="2" height="127.5" fill="url(#tg3)"/>
<rect x="541" y="378" width="2" height="127.5" fill="url(#tg1)"/>
<rect x="543" y="378" width="2" height="127.5" fill="url(#tg2)"/>
<rect x="545" y="378" width="2" height="127.5" fill="url(#tg1)"/>
<rect x="547" y="378" width="2" height="127.5" fill="url(#tg2)"/>
<rect x="549" y="378" width="2" height="127.5" fill="url(#tg2)"/>
<rect x="551" y="378" width="2" height="127.5" fill="url(#tg0)"/>
<rect x="553" y="378" width="2" height="127.5" fill="url(#tg1)"/>
<rect x="555" y="378" width="2" height="127.5" fill="url(#tg3)"/>
<rect x="557" y="378" width="2" height="127.5" fill="url(#tg4)"/>
<rect x="559" y="378" width="2" height="127.5" fill="url(#tg1)"/>
<rect x="561" y="378" width="2" height="127.5" fill="url(#tg3)"/>
<rect x="563" y="378" width="2" height="127.5" fill="url(#tg1)"/>
<rect x="565" y="378" width="2" height="127.5" fill="url(#tg2)"/>
<rect x="567" y="378" width="2" height="127.5" fill="url(#tg3)"/>
<rect x="569" y="378" width="2" height="127.5" fill="url(#tg3)"/>
<rect x="571" y="378" width="2" height="127.5" fill="url(#tg2)"/>
<rect x="573" y="378" width="2" height="127.5" fill="url(#tg1)"/>
<rect x="575" y="378" width="2" height="127.5" fill="url(#tg0)"/>
<rect x="577" y="378" width="2" height="127.5" fill="url(#tg2)"/>
<rect x="579" y="378" width="2" height="127.5" fill="url(#tg5)"/>
<rect x="581" y="378" width="2" height="127.5" fill="url(#tg2)"/>
<rect x="583" y="378" width="2" height="127.5" fill="url(#tg2)"/>
<rect x="585" y="378" width="2" height="127.5" fill="url(#tg1)"/>
<rect x="587" y="378" width="2" height="127.5" fill="url(#tg2)"/>
<rect x="589" y="378" width="2" height="127.5" fill="url(#tg3)"/>
<rect x="591" y="378" width="2" height="127.5" fill="url(#tg1)"/>
<rect x="593" y="378" width="2" height="127.5" fill="url(#tg2)"/>
<rect x="595" y="378" width="2" height="127.5" fill="url(#tg3)"/>
<rect x="597" y="378" width="2" height="127.5" fill="url(#tg3)"/>
<rect x="599" y="378" width="2" height="127.5" fill="url(#tg1)"/>
<rect x="601" y="378" width="2" height="127.5" fill="url(#tg1)"/>
<rect x="603" y="378" width="2" height="127.5" fill="url(#tg4)"/>
<rect x="605" y="378" width="2" height="127.5" fill="url(#tg0)"/>
<rect x="607" y="378" width="2" height="127.5" fill="url(#tg2)"/>
<rect x="609" y="378" width="2" height="127.5" fill="url(#tg4)"/>
<rect x="611" y="378" width="2" height="127.5" fill="url(#tg3)"/>
<rect x="613" y="378" width="2" height="127.5" fill="url(#tg2)"/>
<rect x="615" y="378" width="2" height="127.5" fill="url(#tg1)"/>
<rect x="617" y="378" width="2" height="127.5" fill="url(#tg2)"/>
<rect x="619" y="378" width="2" height="127.5" fill="url(#tg2)"/>
<rect x="621" y="378" width="2" height="127.5" fill="url(#tg2)"/>
<rect x="623" y="378" width="2" height="127.5" fill="url(#tg3)"/>
<rect x="625" y="378" width="2" height="127.5" fill="url(#tg2)"/>
<rect x="627" y="378" width="2" height="127.5" fill="url(#tg2)"/>
<rect x="629" y="378" width="2" height="127.5" fill="url(#tg2)"/>
<rect x="631" y="378" width="2" height="127.5" fill="url(#tg1)"/>
<rect x="633" y="378" width="2" height="127.5" fill="url(#tg3)"/>
<rect x="635" y="378" width="2" height="127.5" fill="url(#tg2)"/>
<rect x="637" y="378" width="2" height="127.5" fill="url(#tg3)"/>
<rect x="639" y="378" width="2" height="127.5" fill="url(#tg1)"/>
<rect x="641" y="378" width="2" height="127.5" fill="url(#tg0)"/>
<rect x="643" y="378" width="2" height="127.5" fill="url(#tg2)"/>
<rect x="645" y="378" width="2" height="127.5" fill="url(#tg1)"/>
<rect x="647" y="378" width="2" height="127.5" fill="url(#tg0)"/>
<rect x="649" y="378" width="2" height="127.5" fill="url(#tg3)"/>
<rect x="651" y="378" width="2" height="127.5" fill="url(#tg4)"/>
<rect x="653" y="378" width="2" height="127.5" fill="url(#tg2)"/>
<rect x="655" y="378" width="2" height="127.5" fill="url(#tg4)"/>
<rect x="657" y="378" width="2" height="127.5" fill="url(#tg1)"/>
<rect x="659" y="378" width="2" height="127.5" fill="url(#tg3)"/>
<rect x="661" y="378" width="2" height="127.5" fill="url(#tg0)"/>
<rect x="663" y="378" width="2" height="127.5" fill="url(#tg4)"/>
<rect x="665" y="378" width="2" height="127.5" fill="url(#tg2)"/>
<rect x="667" y="378" width="2" height="127.5" fill="url(#tg1)"/>
<rect x="669" y="378" width="2" height="127.5" fill="url(#tg2)"/>
<rect x="671" y="378" width="2" height="127.5" fill="url(#tg3)"/>
<rect x="673" y="378" width="2" height="127.5" fill="url(#tg0)"/>
<rect x="675" y="378" width="2" height="127.5" fill="url(#tg3)"/>
<rect x="677" y="378" width="2" height="127.5" fill="url(#tg2)"/>
<rect x="679" y="378" width="2" height="127.5" fill="url(#tg2)"/>
<rect x="681" y="378" width="2" height="127.5" fill="url(#tg5)"/>
<rect x="683" y="378" width="2" height="127.5" fill="url(#tg1)"/>
<rect x="685" y="378" width="2" height="127.5" fill="url(#tg1)"/>
<rect x="687" y="378" width="2" height="127.5" fill="url(#tg1)"/>
<rect x="689" y="378" width="2" height="127.5" fill="url(#tg4)"/>
<rect x="691" y="378" width="2" height="127.5" fill="url(#tg2)"/>
<rect x="693" y="378" width="2" height="127.5" fill="url(#tg1)"/>
<rect x="695" y="378" width="2" height="127.5" fill="url(#tg2)"/>
<rect x="697" y="378" width="2" height="127.5" fill="url(#tg5)"/>
<rect x="699" y="378" width="2" height="127.5" fill="url(#tg1)"/>
<rect x="701" y="378" width="2" height="127.5" fill="url(#tg1)"/>
<rect x="703" y="378" width="2" height="127.5" fill="url(#tg5)"/>
<rect x="705" y="378" width="2" height="127.5" fill="url(#tg3)"/>
<rect x="707" y="378" width="2" height="127.5" fill="url(#tg2)"/>
<rect x="709" y="378" width="2" height="127.5" fill="url(#tg1)"/>
<rect x="711" y="378" width="2" height="127.5" fill="url(#tg2)"/>
<rect x="713" y="378" width="2" height="127.5" fill="url(#tg1)"/>
<rect x="715" y="378" width="2" height="127.5" fill="url(#tg5)"/>
<rect x="717" y="378" width="2" height="127.5" fill="url(#tg2)"/>
<rect x="719" y="378" width="2" height="127.5" fill="url(#tg5)"/>
<rect x="721" y="378" width="2" height="127.5" fill="url(#tg2)"/>
<rect x="723" y="378" width="2" height="127.5" fill="url(#tg2)"/>
<rect x="725" y="378" width="2" height="127.5" fill="url(#tg0)"/>
<rect x="727" y="378" width="2" height="127.5" fill="url(#tg1)"/>
<rect x="729" y="378" width="2" height="127.5" fill="url(#tg4)"/>
<rect x="731" y="378" width="2" height="127.5" fill="url(#tg3)"/>
<rect x="733" y="378" width="2" height="127.5" fill="url(#tg0)"/>
<rect x="735" y="378" width="2" height="127.5" fill="url(#tg4)"/>
<rect x="737" y="378" width="2" height="127.5" fill="url(#tg2)"/>
<rect x="439" y="482.2" width="4" height="1.2" fill="#b83818" shape-rendering="geometricPrecision"/>
<rect x="443" y="482.2" width="4" height="1.2" fill="#b83818" shape-rendering="geometricPrecision"/>
<rect x="447" y="482.2" width="4" height="1.2" fill="#b83818" shape-rendering="geometricPrecision"/>
<rect x="453" y="483.2" width="4" height="1.2" fill="#b83818" shape-rendering="geometricPrecision"/>
<rect x="457" y="482.2" width="4" height="1.2" fill="#b83818" shape-rendering="geometricPrecision"/>
<rect x="461" y="479.2" width="4" height="1.2" fill="#b83818" shape-rendering="geometricPrecision"/>
<rect x="465" y="484.2" width="4" height="1.2" fill="#b83818" shape-rendering="geometricPrecision"/>
<rect x="467" y="484.2" width="4" height="1.2" fill="#b83818" shape-rendering="geometricPrecision"/>
<rect x="469" y="481.2" width="4" height="1.2" fill="#b83818" shape-rendering="geometricPrecision"/>
<rect x="471" y="481.2" width="4" height="1.2" fill="#b83818" shape-rendering="geometricPrecision"/>
<rect x="477" y="482.2" width="4" height="1.2" fill="#b83818" shape-rendering="geometricPrecision"/>
<rect x="479" y="482.2" width="4" height="1.2" fill="#b83818" shape-rendering="geometricPrecision"/>
<rect x="483" y="483.2" width="4" height="1.2" fill="#b83818" shape-rendering="geometricPrecision"/>
<rect x="485" y="481.2" width="4" height="1.2" fill="#b83818" shape-rendering="geometricPrecision"/>
<rect x="487" y="481.2" width="4" height="1.2" fill="#b83818" shape-rendering="geometricPrecision"/>
<rect x="489" y="480.2" width="4" height="1.2" fill="#b83818" shape-rendering="geometricPrecision"/>
<rect x="491" y="482.2" width="4" height="1.2" fill="#b83818" shape-rendering="geometricPrecision"/>
<rect x="493" y="481.2" width="4" height="1.2" fill="#b83818" shape-rendering="geometricPrecision"/>
<rect x="495" y="481.2" width="4" height="1.2" fill="#b83818" shape-rendering="geometricPrecision"/>
<rect x="501" y="479.2" width="4" height="1.2" fill="#b83818" shape-rendering="geometricPrecision"/>
<rect x="503" y="480.2" width="4" height="1.2" fill="#b83818" shape-rendering="geometricPrecision"/>
<rect x="505" y="479.2" width="4" height="1.2" fill="#b83818" shape-rendering="geometricPrecision"/>
<rect x="507" y="479.2" width="4" height="1.2" fill="#b83818" shape-rendering="geometricPrecision"/>
<rect x="509" y="481.2" width="4" height="1.2" fill="#b83818" shape-rendering="geometricPrecision"/>
<rect x="511" y="478.2" width="4" height="1.2" fill="#b83818" shape-rendering="geometricPrecision"/>
<rect x="515" y="480.2" width="4" height="1.2" fill="#b83818" shape-rendering="geometricPrecision"/>
<rect x="517" y="482.2" width="4" height="1.2" fill="#b83818" shape-rendering="geometricPrecision"/>
<rect x="519" y="481.2" width="4" height="1.2" fill="#b83818" shape-rendering="geometricPrecision"/>
<rect x="521" y="478.2" width="4" height="1.2" fill="#b83818" shape-rendering="geometricPrecision"/>
<rect x="523" y="482.2" width="4" height="1.2" fill="#b83818" shape-rendering="geometricPrecision"/>
<rect x="525" y="481.2" width="4" height="1.2" fill="#b83818" shape-rendering="geometricPrecision"/>
<rect x="527" y="480.2" width="4" height="1.2" fill="#b83818" shape-rendering="geometricPrecision"/>
<rect x="529" y="482.2" width="4" height="1.2" fill="#b83818" shape-rendering="geometricPrecision"/>
<rect x="531" y="480.2" width="4" height="1.2" fill="#b83818" shape-rendering="geometricPrecision"/>
<rect x="533" y="481.2" width="4" height="1.2" fill="#b83818" shape-rendering="geometricPrecision"/>
<rect x="535" y="482.2" width="4" height="1.2" fill="#b83818" shape-rendering="geometricPrecision"/>
<rect x="537" y="481.2" width="4" height="1.2" fill="#b83818" shape-rendering="geometricPrecision"/>
<rect x="539" y="483.2" width="4" height="1.2" fill="#b83818" shape-rendering="geometricPrecision"/>
<rect x="541" y="480.2" width="4" height="1.2" fill="#b83818" shape-rendering="geometricPrecision"/>
<rect x="543" y="482.2" width="4" height="1.2" fill="#b83818" shape-rendering="geometricPrecision"/>
<rect x="547" y="481.2" width="4" height="1.2" fill="#b83818" shape-rendering="geometricPrecision"/>
<rect x="549" y="481.2" width="4" height="1.2" fill="#b83818" shape-rendering="geometricPrecision"/>
<rect x="551" y="481.2" width="4" height="1.2" fill="#b83818" shape-rendering="geometricPrecision"/>
<rect x="553" y="481.2" width="4" height="1.2" fill="#b83818" shape-rendering="geometricPrecision"/>
<rect x="557" y="482.2" width="4" height="1.2" fill="#b83818" shape-rendering="geometricPrecision"/>
<rect x="559" y="484.2" width="4" height="1.2" fill="#b83818" shape-rendering="geometricPrecision"/>
<rect x="561" y="484.2" width="4" height="1.2" fill="#b83818" shape-rendering="geometricPrecision"/>
<rect x="563" y="482.2" width="4" height="1.2" fill="#b83818" shape-rendering="geometricPrecision"/>
<rect x="569" y="483.2" width="4" height="1.2" fill="#b83818" shape-rendering="geometricPrecision"/>
<rect x="573" y="484.2" width="4" height="1.2" fill="#b83818" shape-rendering="geometricPrecision"/>
<rect x="575" y="484.2" width="4" height="1.2" fill="#b83818" shape-rendering="geometricPrecision"/>
<rect x="577" y="481.2" width="4" height="1.2" fill="#b83818" shape-rendering="geometricPrecision"/>
<rect x="579" y="483.2" width="4" height="1.2" fill="#b83818" shape-rendering="geometricPrecision"/>
<rect x="581" y="485.2" width="4" height="1.2" fill="#b83818" shape-rendering="geometricPrecision"/>
<rect x="587" y="483.2" width="4" height="1.2" fill="#b83818" shape-rendering="geometricPrecision"/>
<rect x="589" y="484.2" width="4" height="1.2" fill="#b83818" shape-rendering="geometricPrecision"/>
<rect x="591" y="484.2" width="4" height="1.2" fill="#b83818" shape-rendering="geometricPrecision"/>
<rect x="597" y="481.2" width="4" height="1.2" fill="#b83818" shape-rendering="geometricPrecision"/>
<rect x="605" y="480.2" width="4" height="1.2" fill="#b83818" shape-rendering="geometricPrecision"/>
<rect x="615" y="480.2" width="4" height="1.2" fill="#b83818" shape-rendering="geometricPrecision"/>
<rect x="617" y="483.2" width="4" height="1.2" fill="#b83818" shape-rendering="geometricPrecision"/>
<rect x="619" y="482.2" width="4" height="1.2" fill="#b83818" shape-rendering="geometricPrecision"/>
<rect x="621" y="479.2" width="4" height="1.2" fill="#b83818" shape-rendering="geometricPrecision"/>
<rect x="623" y="481.2" width="4" height="1.2" fill="#b83818" shape-rendering="geometricPrecision"/>
<rect x="625" y="479.2" width="4" height="1.2" fill="#b83818" shape-rendering="geometricPrecision"/>
<rect x="627" y="482.2" width="4" height="1.2" fill="#b83818" shape-rendering="geometricPrecision"/>
<rect x="631" y="481.2" width="4" height="1.2" fill="#b83818" shape-rendering="geometricPrecision"/>
<rect x="633" y="479.2" width="4" height="1.2" fill="#b83818" shape-rendering="geometricPrecision"/>
<rect x="635" y="480.2" width="4" height="1.2" fill="#b83818" shape-rendering="geometricPrecision"/>
<rect x="637" y="481.2" width="4" height="1.2" fill="#b83818" shape-rendering="geometricPrecision"/>
<rect x="639" y="480.2" width="4" height="1.2" fill="#b83818" shape-rendering="geometricPrecision"/>
<rect x="641" y="481.2" width="4" height="1.2" fill="#b83818" shape-rendering="geometricPrecision"/>
<rect x="643" y="482.2" width="4" height="1.2" fill="#b83818" shape-rendering="geometricPrecision"/>
<rect x="645" y="481.2" width="4" height="1.2" fill="#b83818" shape-rendering="geometricPrecision"/>
<rect x="647" y="481.2" width="4" height="1.2" fill="#b83818" shape-rendering="geometricPrecision"/>
<rect x="649" y="483.2" width="4" height="1.2" fill="#b83818" shape-rendering="geometricPrecision"/>
<rect x="655" y="484.2" width="4" height="1.2" fill="#b83818" shape-rendering="geometricPrecision"/>
<rect x="659" y="484.2" width="4" height="1.2" fill="#b83818" shape-rendering="geometricPrecision"/>
<rect x="661" y="482.2" width="4" height="1.2" fill="#b83818" shape-rendering="geometricPrecision"/>
<rect x="663" y="484.2" width="4" height="1.2" fill="#b83818" shape-rendering="geometricPrecision"/>
<rect x="665" y="483.2" width="4" height="1.2" fill="#b83818" shape-rendering="geometricPrecision"/>
<rect x="667" y="484.2" width="4" height="1.2" fill="#b83818" shape-rendering="geometricPrecision"/>
<rect x="669" y="483.2" width="4" height="1.2" fill="#b83818" shape-rendering="geometricPrecision"/>
<rect x="671" y="486.2" width="4" height="1.2" fill="#b83818" shape-rendering="geometricPrecision"/>
<rect x="673" y="482.2" width="4" height="1.2" fill="#b83818" shape-rendering="geometricPrecision"/>
<rect x="675" y="482.2" width="4" height="1.2" fill="#b83818" shape-rendering="geometricPrecision"/>
<rect x="677" y="483.2" width="4" height="1.2" fill="#b83818" shape-rendering="geometricPrecision"/>
<rect x="679" y="482.2" width="4" height="1.2" fill="#b83818" shape-rendering="geometricPrecision"/>
<rect x="681" y="485.2" width="4" height="1.2" fill="#b83818" shape-rendering="geometricPrecision"/>
<rect x="685" y="482.2" width="4" height="1.2" fill="#b83818" shape-rendering="geometricPrecision"/>
<rect x="687" y="482.2" width="4" height="1.2" fill="#b83818" shape-rendering="geometricPrecision"/>
<rect x="689" y="485.2" width="4" height="1.2" fill="#b83818" shape-rendering="geometricPrecision"/>
<rect x="691" y="485.2" width="4" height="1.2" fill="#b83818" shape-rendering="geometricPrecision"/>
<rect x="693" y="483.2" width="4" height="1.2" fill="#b83818" shape-rendering="geometricPrecision"/>
<rect x="695" y="485.2" width="4" height="1.2" fill="#b83818" shape-rendering="geometricPrecision"/>
<rect x="697" y="483.2" width="4" height="1.2" fill="#b83818" shape-rendering="geometricPrecision"/>
<rect x="699" y="484.2" width="4" height="1.2" fill="#b83818" shape-rendering="geometricPrecision"/>
<rect x="701" y="484.2" width="4" height="1.2" fill="#b83818" shape-rendering="geometricPrecision"/>
<rect x="703" y="482.2" width="4" height="1.2" fill="#b83818" shape-rendering="geometricPrecision"/>
<rect x="705" y="483.2" width="4" height="1.2" fill="#b83818" shape-rendering="geometricPrecision"/>
<rect x="707" y="485.2" width="4" height="1.2" fill="#b83818" shape-rendering="geometricPrecision"/>
<rect x="709" y="478.2" width="4" height="1.2" fill="#b83818" shape-rendering="geometricPrecision"/>
<rect x="711" y="483.2" width="4" height="1.2" fill="#b83818" shape-rendering="geometricPrecision"/>
<rect x="713" y="483.2" width="4" height="1.2" fill="#b83818" shape-rendering="geometricPrecision"/>
<rect x="715" y="483.2" width="4" height="1.2" fill="#b83818" shape-rendering="geometricPrecision"/>
<rect x="717" y="483.2" width="4" height="1.2" fill="#b83818" shape-rendering="geometricPrecision"/>
<rect x="719" y="479.2" width="4" height="1.2" fill="#b83818" shape-rendering="geometricPrecision"/>
<rect x="725" y="483.2" width="4" height="1.2" fill="#b83818" shape-rendering="geometricPrecision"/>
<rect x="727" y="483.2" width="4" height="1.2" fill="#b83818" shape-rendering="geometricPrecision"/>
<rect x="729" y="482.2" width="4" height="1.2" fill="#b83818" shape-rendering="geometricPrecision"/>
<rect x="731" y="481.2" width="4" height="1.2" fill="#b83818" shape-rendering="geometricPrecision"/>
<rect x="733" y="481.2" width="4" height="1.2" fill="#b83818" shape-rendering="geometricPrecision"/>
<rect x="735" y="482.2" width="4" height="1.2" fill="#b83818" shape-rendering="geometricPrecision"/>
<rect x="437" y="500.45" width="7" height="1.1" fill="#222222" shape-rendering="geometricPrecision"/>
<rect x="444" y="499.65" width="63" height="1.1" fill="#222222" shape-rendering="geometricPrecision"/>
<rect x="507" y="498.45" width="13" height="1.1" fill="#222222" shape-rendering="geometricPrecision"/>
<rect x="520" y="496.75" width="13" height="1.1" fill="#222222" shape-rendering="geometricPrecision"/>
<rect x="533" y="498.45" width="37" height="1.1" fill="#222222" shape-rendering="geometricPrecision"/>
<rect x="570" y="500.45" width="40" height="1.1" fill="#222222" shape-rendering="geometricPrecision"/>
<rect x="610" y="501.25" width="48" height="1.1" fill="#222222" shape-rendering="geometricPrecision"/>
<rect x="658" y="501.75" width="25" height="1.1" fill="#222222" shape-rendering="geometricPrecision"/>
<rect x="683" y="502.45" width="28" height="1.1" fill="#222222" shape-rendering="geometricPrecision"/>
<rect x="711" y="501.85" width="22" height="1.1" fill="#222222" shape-rendering="geometricPrecision"/>
<rect x="733" y="500.85" width="6" height="1.1" fill="#222222" shape-rendering="geometricPrecision"/>
<rect x="437" y="505.5" width="302" height="3" fill="#000"/>
<rect x="437" y="508.5" width="1" height="11" fill="#000"/>
<text x="432.5" y="528" font-size="8.2" textLength="22.6" lengthAdjust="spacingAndGlyphs" fill="#000" stroke="#000" stroke-width="0.12" font-family="Liberation Sans">15:10</text>
<rect x="462" y="508.5" width="1" height="6" fill="#000"/>
<rect x="487" y="508.5" width="1" height="11" fill="#000"/>
<text x="482.5" y="528" font-size="8.2" textLength="22.6" lengthAdjust="spacingAndGlyphs" fill="#000" stroke="#000" stroke-width="0.12" font-family="Liberation Sans">15:30</text>
<rect x="512" y="508.5" width="1" height="6" fill="#000"/>
<rect x="537" y="508.5" width="1" height="11" fill="#000"/>
<text x="532.5" y="528" font-size="8.2" textLength="22.6" lengthAdjust="spacingAndGlyphs" fill="#000" stroke="#000" stroke-width="0.12" font-family="Liberation Sans">15:50</text>
<rect x="562" y="508.5" width="1" height="6" fill="#000"/>
<rect x="588" y="508.5" width="1" height="11" fill="#000"/>
<text x="583.5" y="528" font-size="8.2" textLength="22.6" lengthAdjust="spacingAndGlyphs" fill="#000" stroke="#000" stroke-width="0.12" font-family="Liberation Sans">16:10</text>
<rect x="613" y="508.5" width="1" height="6" fill="#000"/>
<rect x="638" y="508.5" width="1" height="11" fill="#000"/>
<text x="633.5" y="528" font-size="8.2" textLength="22.6" lengthAdjust="spacingAndGlyphs" fill="#000" stroke="#000" stroke-width="0.12" font-family="Liberation Sans">16:30</text>
<rect x="663" y="508.5" width="1" height="6" fill="#000"/>
<rect x="688" y="508.5" width="1" height="11" fill="#000"/>
<text x="683.5" y="528" font-size="8.2" textLength="22.6" lengthAdjust="spacingAndGlyphs" fill="#000" stroke="#000" stroke-width="0.12" font-family="Liberation Sans">16:50</text>
<rect x="713" y="508.5" width="1" height="6" fill="#000"/>
<rect x="738" y="508.5" width="1" height="11" fill="#000"/>
<text x="733.5" y="528" font-size="8.2" textLength="22.6" lengthAdjust="spacingAndGlyphs" fill="#000" stroke="#000" stroke-width="0.12" font-family="Liberation Sans">17:10</text>
<rect x="432" y="378" width="5" height="1" fill="#000"/>
<text x="431.5" y="380.9" font-size="8.2" text-anchor="end" fill="#000" stroke="#000" stroke-width="0.12" font-family="Liberation Sans">34</text>
<rect x="432" y="409" width="5" height="1" fill="#000"/>
<text x="431.5" y="412.4" font-size="8.2" text-anchor="end" fill="#000" stroke="#000" stroke-width="0.12" font-family="Liberation Sans">25.5</text>
<rect x="432" y="443" width="5" height="1" fill="#000"/>
<text x="431.5" y="446.3" font-size="8.2" text-anchor="end" fill="#000" stroke="#000" stroke-width="0.12" font-family="Liberation Sans">17</text>
<rect x="432" y="477" width="5" height="1" fill="#000"/>
<text x="431.5" y="480.5" font-size="8.2" text-anchor="end" fill="#000" stroke="#000" stroke-width="0.12" font-family="Liberation Sans">8.5</text>
<rect x="432" y="510" width="5" height="1" fill="#000"/>
<text x="431.5" y="510.4" font-size="8.2" text-anchor="end" fill="#000" stroke="#000" stroke-width="0.12" font-family="Liberation Sans">0</text>
<rect x="742" y="376" width="6" height="137" fill="url(#cbj)"/>
<rect x="749" y="378" width="7" height="1" fill="#000"/>
<text x="756" y="380.9" font-size="8.2" fill="#000" stroke="#000" stroke-width="0.12" font-family="Liberation Sans">290</text>
<rect x="749" y="410" width="7" height="1" fill="#000"/>
<text x="756" y="412.6" font-size="8.2" fill="#000" stroke="#000" stroke-width="0.12" font-family="Liberation Sans">270</text>
<rect x="749" y="444" width="7" height="1" fill="#000"/>
<text x="756" y="446.6" font-size="8.2" fill="#000" stroke="#000" stroke-width="0.12" font-family="Liberation Sans">250</text>
<rect x="749" y="478" width="7" height="1" fill="#000"/>
<text x="756" y="480.8" font-size="8.2" fill="#000" stroke="#000" stroke-width="0.12" font-family="Liberation Sans">230</text>
<rect x="749" y="510" width="7" height="1" fill="#000"/>
<text x="756" y="510.7" font-size="8.2" fill="#000" stroke="#000" stroke-width="0.12" font-family="Liberation Sans">210</text>
<text x="402.9" y="552" font-size="9.8" textLength="17" lengthAdjust="spacingAndGlyphs" fill="#000" stroke="#000" stroke-width="0.12" font-family="Liberation Sans">ILW</text>
<rect x="437" y="554" width="302" height="132.5" fill="#000"/>
<path d="M437 686.5 L437 678 L439 678 L439 677 L441 677 L441 680 L443 680 L443 680 L445 680 L445 679 L447 679 L447 681 L449 681 L449 679.75 L451 679.75 L451 680.25 L453 680.25 L453 678.25 L455 678.25 L455 675.75 L457 675.75 L457 678 L459 678 L459 682 L461 682 L461 681.75 L463 681.75 L463 680.25 L465 680.25 L465 680 L467 680 L467 680 L469 680 L469 679 L471 679 L471 681 L473 681 L473 678 L475 678 L475 680 L477 680 L477 677.5 L479 677.5 L479 669.5 L481 669.5 L481 666.5 L483 666.5 L483 673.5 L485 673.5 L485 679.17 L487 679.17 L487 675.83 L489 675.83 L489 680.5 L491 680.5 L491 678.5 L493 678.5 L493 679.5 L495 679.5 L495 680.5 L497 680.5 L497 672.5 L499 672.5 L499 678 L501 678 L501 679.64 L503 679.64 L503 682.93 L505 682.93 L505 682.21 L507 682.21 L507 682.5 L509 682.5 L509 683.17 L511 683.17 L511 683.83 L513 683.83 L513 681.5 L515 681.5 L515 679 L517 679 L517 682.5 L519 682.5 L519 678.17 L521 678.17 L521 669.5 L523 669.5 L523 672.5 L525 672.5 L525 681.5 L527 681.5 L527 682 L529 682 L529 680.5 L531 680.5 L531 677.9 L533 677.9 L533 677.3 L535 677.3 L535 678.17 L537 678.17 L537 677.5 L539 677.5 L539 675.83 L541 675.83 L541 675.5 L543 675.5 L543 676.5 L545 676.5 L545 676.5 L547 676.5 L547 681.79 L549 681.79 L549 680.07 L551 680.07 L551 682.36 L553 682.36 L553 679.36 L555 679.36 L555 681.07 L557 681.07 L557 680.79 L559 680.79 L559 680.5 L561 680.5 L561 679.83 L563 679.83 L563 677.17 L565 677.17 L565 673.5 L567 673.5 L567 673 L569 673 L569 678.5 L571 678.5 L571 677.75 L573 677.75 L573 680 L575 680 L575 675.25 L577 675.25 L577 675.5 L579 675.5 L579 679.7 L581 679.7 L581 680.9 L583 680.9 L583 681.64 L585 681.64 L585 680.93 L587 680.93 L587 682.21 L589 682.21 L589 682.5 L591 682.5 L591 684 L593 684 L593 683.5 L595 683.5 L595 680.5 L597 680.5 L597 682.5 L599 682.5 L599 680.5 L601 680.5 L601 680.5 L603 680.5 L603 681.5 L605 681.5 L605 683.36 L607 683.36 L607 682.07 L609 682.07 L609 681.79 L611 681.79 L611 681.5 L613 681.5 L613 679.75 L615 679.75 L615 682 L617 682 L617 684 L619 684 L619 679.5 L621 679.5 L621 679.3 L623 679.3 L623 683.1 L625 683.1 L625 683.9 L627 683.9 L627 682.7 L629 682.7 L629 682.5 L631 682.5 L631 681.5 L633 681.5 L633 681.5 L635 681.5 L635 682.5 L637 682.5 L637 683.5 L639 683.5 L639 681.5 L641 681.5 L641 673.5 L643 673.5 L643 672.5 L645 672.5 L645 681.5 L647 681.5 L647 683.7 L649 683.7 L649 681.9 L651 681.9 L651 681.1 L653 681.1 L653 679.3 L655 679.3 L655 682.5 L657 682.5 L657 681 L659 681 L659 679.5 L661 679.5 L661 676 L663 676 L663 678.5 L665 678.5 L665 673.5 L667 673.5 L667 671.5 L669 671.5 L669 668.5 L671 668.5 L671 678.5 L673 678.5 L673 674.93 L675 674.93 L675 674.36 L677 674.36 L677 670.79 L679 670.79 L679 670.5 L681 670.5 L681 672.5 L683 672.5 L683 678.5 L685 678.5 L685 677.5 L687 677.5 L687 677.5 L689 677.5 L689 675.5 L691 675.5 L691 677.17 L693 677.17 L693 674.83 L695 674.83 L695 672.5 L697 672.5 L697 675.7 L699 675.7 L699 672.9 L701 672.9 L701 669.5 L703 669.5 L703 675.17 L705 675.17 L705 678.5 L707 678.5 L707 675.83 L709 675.83 L709 679.17 L711 679.17 L711 680.5 L713 680.5 L713 680.17 L715 680.17 L715 679.83 L717 679.83 L717 679.5 L719 679.5 L719 676.5 L721 676.5 L721 675.5 L723 675.5 L723 676 L725 676 L725 670.5 L727 670.5 L727 671.5 L729 671.5 L729 681.5 L731 681.5 L731 678.5 L733 678.5 L733 678.5 L735 678.5 L735 678.5 L737 678.5 L737 682.5 L739 682.5 L739 686.5 Z" fill="#14f014"/>
<rect x="437" y="686.5" width="1" height="11" fill="#000"/>
<text x="432.5" y="706.6" font-size="8.2" textLength="22.6" lengthAdjust="spacingAndGlyphs" fill="#000" stroke="#000" stroke-width="0.12" font-family="Liberation Sans">15:10</text>
<rect x="462" y="686.5" width="1" height="6" fill="#000"/>
<rect x="487" y="686.5" width="1" height="11" fill="#000"/>
<text x="482.5" y="706.6" font-size="8.2" textLength="22.6" lengthAdjust="spacingAndGlyphs" fill="#000" stroke="#000" stroke-width="0.12" font-family="Liberation Sans">15:30</text>
<rect x="512" y="686.5" width="1" height="6" fill="#000"/>
<rect x="537" y="686.5" width="1" height="11" fill="#000"/>
<text x="532.5" y="706.6" font-size="8.2" textLength="22.6" lengthAdjust="spacingAndGlyphs" fill="#000" stroke="#000" stroke-width="0.12" font-family="Liberation Sans">15:50</text>
<rect x="562" y="686.5" width="1" height="6" fill="#000"/>
<rect x="588" y="686.5" width="1" height="11" fill="#000"/>
<text x="583.5" y="706.6" font-size="8.2" textLength="22.6" lengthAdjust="spacingAndGlyphs" fill="#000" stroke="#000" stroke-width="0.12" font-family="Liberation Sans">16:10</text>
<rect x="613" y="686.5" width="1" height="6" fill="#000"/>
<rect x="638" y="686.5" width="1" height="11" fill="#000"/>
<text x="633.5" y="706.6" font-size="8.2" textLength="22.6" lengthAdjust="spacingAndGlyphs" fill="#000" stroke="#000" stroke-width="0.12" font-family="Liberation Sans">16:30</text>
<rect x="663" y="686.5" width="1" height="6" fill="#000"/>
<rect x="688" y="686.5" width="1" height="11" fill="#000"/>
<text x="683.5" y="706.6" font-size="8.2" textLength="22.6" lengthAdjust="spacingAndGlyphs" fill="#000" stroke="#000" stroke-width="0.12" font-family="Liberation Sans">16:50</text>
<rect x="713" y="686.5" width="1" height="6" fill="#000"/>
<rect x="738" y="686.5" width="1" height="11" fill="#000"/>
<text x="733.5" y="706.6" font-size="8.2" textLength="22.6" lengthAdjust="spacingAndGlyphs" fill="#000" stroke="#000" stroke-width="0.12" font-family="Liberation Sans">17:10</text>
<rect x="432" y="556" width="5" height="1" fill="#000"/>
<text x="431.5" y="559.2" font-size="8.2" text-anchor="end" fill="#000" stroke="#000" stroke-width="0.12" font-family="Liberation Sans">2</text>
<rect x="432" y="621" width="5" height="1" fill="#000"/>
<text x="431.5" y="623.6" font-size="8.2" text-anchor="end" fill="#000" stroke="#000" stroke-width="0.12" font-family="Liberation Sans">1</text>
<rect x="432" y="688" width="5" height="1" fill="#000"/>
<text x="431.5" y="686.9" font-size="8.2" text-anchor="end" fill="#000" stroke="#000" stroke-width="0.12" font-family="Liberation Sans">0</text>
<text x="814.2" y="49.2" font-size="20.5" font-weight="bold" textLength="148.2" lengthAdjust="spacingAndGlyphs" fill="#333333" stroke="#333333" stroke-width="0.12" font-family="Liberation Sans">NIRSS - Local</text>
<text x="869.6" y="94.2" font-size="10.5" font-weight="bold" textLength="32.9" lengthAdjust="spacingAndGlyphs" fill="#333333" stroke="#333333" stroke-width="0.12" font-family="Liberation Sans">Mode:</text>
<rect x="799" y="107" width="87.4" height="22.6" fill="#a00000" stroke="#6a2020" stroke-width="1"/>
<text x="817" y="121.8" font-size="10.2" font-weight="bold" textLength="53" lengthAdjust="spacingAndGlyphs" fill="#ffffff" stroke="#ffffff" stroke-width="0.1" font-family="Liberation Sans">REALTIME</text>
<rect x="892.4" y="107" width="83.1" height="22.6" fill="#00a800" stroke="#3a7a3a" stroke-width="1"/>
<text x="910.6" y="121.8" font-size="10.2" font-weight="bold" textLength="48.8" lengthAdjust="spacingAndGlyphs" fill="#eeffee" stroke="#eeffee" stroke-width="0.1" font-family="Liberation Sans">ARCHIVE</text>
<text x="835.4" y="149.8" font-size="10.5" font-weight="bold" textLength="103.9" lengthAdjust="spacingAndGlyphs" fill="#333333" stroke="#333333" stroke-width="0.12" font-family="Liberation Sans">Display time (UTC)</text>
<rect x="799.5" y="165.5" width="145.1" height="15.2" fill="#ffffff" stroke="#7a7a7a" stroke-width="1"/>
<text x="802.2" y="176.8" font-size="10.3" font-weight="bold" textLength="116.1" lengthAdjust="spacingAndGlyphs" fill="#000" stroke="#000" stroke-width="0.12" font-family="Liberation Sans">2012-02-11 17:10:00</text>
<rect x="951.3" y="163.3" width="23.5" height="20.3" fill="url(#btn)" stroke="#7f8fa0" stroke-width="1"/>
<rect x="954" y="166.1" width="18" height="14.4" fill="none" stroke="#a8b8c8" stroke-width="0.8"/>
<text x="956.2" y="176.9" font-size="11.2" font-weight="bold" textLength="14.8" lengthAdjust="spacingAndGlyphs" fill="#000" stroke="#000" stroke-width="0.12" font-family="Liberation Sans">GO</text>
<rect x="803.3" y="194.3" width="31.4" height="20.5" fill="url(#btn)" stroke="#7f8fa0" stroke-width="1"/>
<text x="807.8" y="207.5" font-size="8.6" textLength="22.4" lengthAdjust="spacingAndGlyphs" fill="#000" stroke="#000" stroke-width="0.5" font-family="Liberation Sans">&lt;&lt;&lt;</text>
<rect x="840" y="194.3" width="23.7" height="20.5" fill="url(#btn)" stroke="#7f8fa0" stroke-width="1"/>
<text x="845.35" y="207.5" font-size="8.6" textLength="13" lengthAdjust="spacingAndGlyphs" fill="#000" stroke="#000" stroke-width="0.5" font-family="Liberation Sans">&lt;&lt;</text>
<rect x="869.2" y="194.3" width="15.5" height="20.5" fill="url(#btn)" stroke="#7f8fa0" stroke-width="1"/>
<text x="874.2" y="207.5" font-size="8.6" textLength="5.5" lengthAdjust="spacingAndGlyphs" fill="#000" stroke="#000" stroke-width="0.5" font-family="Liberation Sans">&lt;</text>
<rect x="890" y="194.3" width="15.5" height="20.5" fill="url(#btn)" stroke="#7f8fa0" stroke-width="1"/>
<text x="895" y="207.5" font-size="8.6" textLength="5.5" lengthAdjust="spacingAndGlyphs" fill="#000" stroke="#000" stroke-width="0.5" font-family="Liberation Sans">&gt;</text>
<rect x="911" y="194.3" width="24" height="20.5" fill="url(#btn)" stroke="#7f8fa0" stroke-width="1"/>
<text x="916.5" y="207.5" font-size="8.6" textLength="13" lengthAdjust="spacingAndGlyphs" fill="#000" stroke="#000" stroke-width="0.5" font-family="Liberation Sans">&gt;&gt;</text>
<rect x="940.1" y="194.3" width="31.9" height="20.5" fill="url(#btn)" stroke="#7f8fa0" stroke-width="1"/>
<text x="944.85" y="207.5" font-size="8.6" textLength="22.4" lengthAdjust="spacingAndGlyphs" fill="#000" stroke="#000" stroke-width="0.5" font-family="Liberation Sans">&gt;&gt;&gt;</text>
<text x="809.5" y="240.5" font-size="13" textLength="77.8" lengthAdjust="spacingAndGlyphs" fill="#222222" stroke="#222222" stroke-width="0.45" font-family="Liberation Sans">Time zoom:</text>
<rect x="894.2" y="225.2" width="70.4" height="23.2" fill="#eef2f6" stroke="#7f8fa0" stroke-width="1"/>
<rect x="945.5" y="225.2" width="19.1" height="23.2" fill="url(#btn)" stroke="#7f8fa0" stroke-width="1"/>
<text x="897.7" y="240.8" font-size="13" textLength="33.4" lengthAdjust="spacingAndGlyphs" fill="#111111" stroke="#111111" stroke-width="0.45" font-family="Liberation Sans">2 hrs</text>
<path d="M950 235 L960 235 L955 240 Z" fill="#222"/></svg></body></html>
